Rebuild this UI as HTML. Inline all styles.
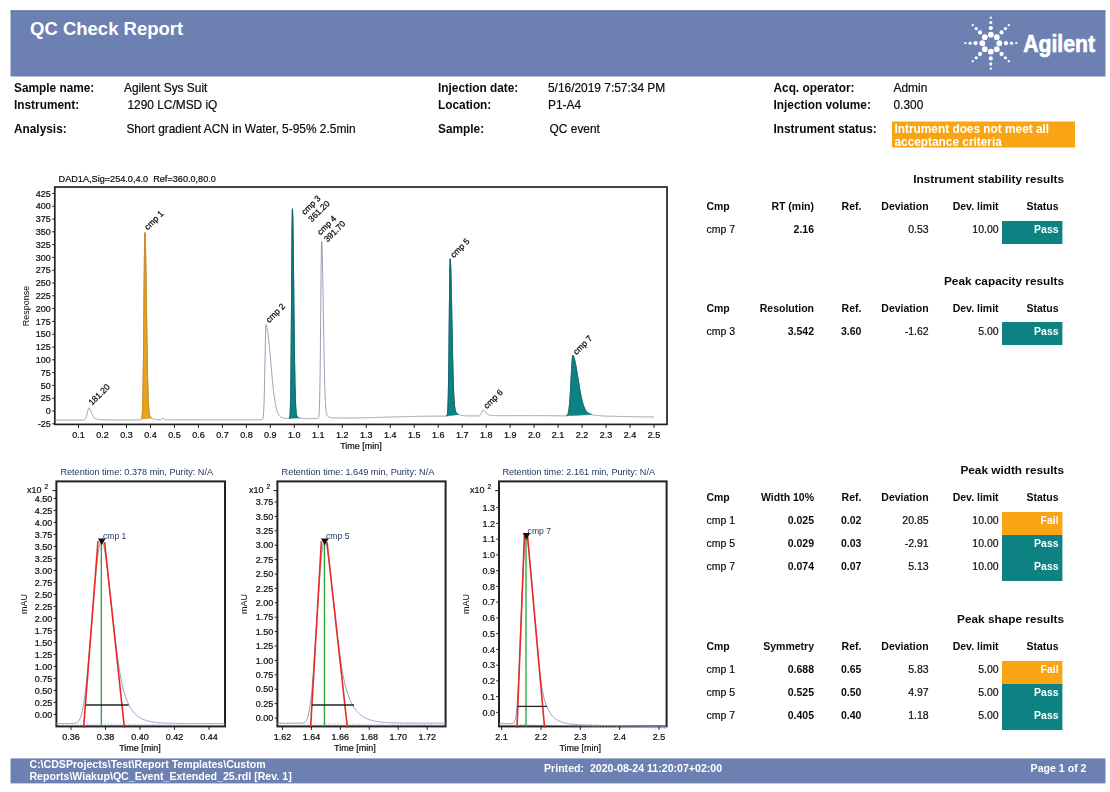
<!DOCTYPE html>
<html><head><meta charset="utf-8"><title>QC Check Report</title>
<style>
html,body{margin:0;padding:0;background:#fff;}
body{width:1110px;height:792px;overflow:hidden;font-family:"Liberation Sans",sans-serif;}
svg{display:block;font-family:"Liberation Sans",sans-serif;filter:blur(0.45px);}
</style></head><body>
<svg width="1110" height="792" viewBox="0 0 1110 792">
<rect x="10.5" y="10.5" width="1095" height="66" fill="#6c80b2"/>
<rect x="10.5" y="10.5" width="1095" height="1" fill="#55688f"/>
<text x="30.00" y="35.40" font-size="18.5" font-weight="bold" text-anchor="start" fill="#fff">QC Check Report</text>
<circle cx="999.30" cy="43.20" r="2.85" fill="#fff"/>
<circle cx="1006.00" cy="43.20" r="2.1" fill="#fff"/>
<circle cx="1011.50" cy="43.20" r="1.6" fill="#fff"/>
<circle cx="1016.30" cy="43.20" r="1.15" fill="#fff"/>
<circle cx="996.81" cy="49.21" r="2.85" fill="#fff"/>
<circle cx="1001.55" cy="53.95" r="2.1" fill="#fff"/>
<circle cx="1005.44" cy="57.84" r="1.6" fill="#fff"/>
<circle cx="1008.83" cy="61.23" r="1.15" fill="#fff"/>
<circle cx="990.80" cy="51.70" r="2.85" fill="#fff"/>
<circle cx="990.80" cy="58.40" r="2.1" fill="#fff"/>
<circle cx="990.80" cy="63.90" r="1.6" fill="#fff"/>
<circle cx="990.80" cy="68.70" r="1.15" fill="#fff"/>
<circle cx="984.79" cy="49.21" r="2.85" fill="#fff"/>
<circle cx="980.05" cy="53.95" r="2.1" fill="#fff"/>
<circle cx="976.16" cy="57.84" r="1.6" fill="#fff"/>
<circle cx="972.77" cy="61.23" r="1.15" fill="#fff"/>
<circle cx="982.30" cy="43.20" r="2.85" fill="#fff"/>
<circle cx="975.60" cy="43.20" r="2.1" fill="#fff"/>
<circle cx="970.10" cy="43.20" r="1.6" fill="#fff"/>
<circle cx="965.30" cy="43.20" r="1.15" fill="#fff"/>
<circle cx="984.79" cy="37.19" r="2.85" fill="#fff"/>
<circle cx="980.05" cy="32.45" r="2.1" fill="#fff"/>
<circle cx="976.16" cy="28.56" r="1.6" fill="#fff"/>
<circle cx="972.77" cy="25.17" r="1.15" fill="#fff"/>
<circle cx="990.80" cy="34.70" r="2.85" fill="#fff"/>
<circle cx="990.80" cy="28.00" r="2.1" fill="#fff"/>
<circle cx="990.80" cy="22.50" r="1.6" fill="#fff"/>
<circle cx="990.80" cy="17.70" r="1.15" fill="#fff"/>
<circle cx="996.81" cy="37.19" r="2.85" fill="#fff"/>
<circle cx="1001.55" cy="32.45" r="2.1" fill="#fff"/>
<circle cx="1005.44" cy="28.56" r="1.6" fill="#fff"/>
<circle cx="1008.83" cy="25.17" r="1.15" fill="#fff"/>
<text transform="translate(1023.2,51.6) scale(0.866,1)" font-size="24.5" font-weight="bold" fill="#fff" stroke="#fff" stroke-width="0.7">Agilent</text>
<text x="14.00" y="91.80" font-size="11.85" font-weight="bold" text-anchor="start" fill="#0a0a0a">Sample name:</text>
<text x="124.00" y="91.80" font-size="11.92" text-anchor="start" fill="#0a0a0a" stroke="#111" stroke-width="0.2">Agilent Sys Suit</text>
<text x="438.00" y="92.40" font-size="11.85" font-weight="bold" text-anchor="start" fill="#0a0a0a">Injection date:</text>
<text x="548.00" y="92.40" font-size="11.92" text-anchor="start" fill="#0a0a0a" stroke="#111" stroke-width="0.2">5/16/2019 7:57:34 PM</text>
<text x="773.50" y="91.80" font-size="11.85" font-weight="bold" text-anchor="start" fill="#0a0a0a">Acq. operator:</text>
<text x="893.50" y="91.80" font-size="11.92" text-anchor="start" fill="#0a0a0a" stroke="#111" stroke-width="0.2">Admin</text>
<text x="14.00" y="109.00" font-size="11.85" font-weight="bold" text-anchor="start" fill="#0a0a0a">Instrument:</text>
<text x="127.40" y="109.00" font-size="11.92" text-anchor="start" fill="#0a0a0a" stroke="#111" stroke-width="0.2">1290 LC/MSD iQ</text>
<text x="438.00" y="109.00" font-size="11.85" font-weight="bold" text-anchor="start" fill="#0a0a0a">Location:</text>
<text x="548.00" y="109.00" font-size="11.92" text-anchor="start" fill="#0a0a0a" stroke="#111" stroke-width="0.2">P1-A4</text>
<text x="773.50" y="109.00" font-size="11.85" font-weight="bold" text-anchor="start" fill="#0a0a0a">Injection volume:</text>
<text x="893.50" y="109.00" font-size="11.92" text-anchor="start" fill="#0a0a0a" stroke="#111" stroke-width="0.2">0.300</text>
<text x="14.00" y="132.80" font-size="11.85" font-weight="bold" text-anchor="start" fill="#0a0a0a">Analysis:</text>
<text x="126.40" y="132.80" font-size="11.92" text-anchor="start" fill="#0a0a0a" stroke="#111" stroke-width="0.2">Short gradient ACN in Water, 5-95% 2.5min</text>
<text x="438.00" y="133.00" font-size="11.85" font-weight="bold" text-anchor="start" fill="#0a0a0a">Sample:</text>
<text x="549.60" y="133.00" font-size="11.92" text-anchor="start" fill="#0a0a0a" stroke="#111" stroke-width="0.2">QC event</text>
<text x="773.50" y="132.80" font-size="11.85" font-weight="bold" text-anchor="start" fill="#0a0a0a">Instrument status:</text>
<rect x="892" y="121.5" width="183" height="26" fill="#f9a513"/>
<text x="894.50" y="132.80" font-size="11.85" font-weight="bold" text-anchor="start" fill="#fff">Intrument does not meet all</text>
<text x="894.50" y="145.60" font-size="11.85" font-weight="bold" text-anchor="start" fill="#fff">acceptance criteria</text>
<text x="1064.00" y="183.00" font-size="11.8" font-weight="bold" text-anchor="end" fill="#0a0a0a">Instrument stability results</text>
<text x="706.40" y="210.00" font-size="10.5" font-weight="bold" text-anchor="start" fill="#0a0a0a">Cmp</text>
<text x="814.00" y="210.00" font-size="10.5" font-weight="bold" text-anchor="end" fill="#0a0a0a">RT (min)</text>
<text x="861.40" y="210.00" font-size="10.5" font-weight="bold" text-anchor="end" fill="#0a0a0a">Ref.</text>
<text x="928.60" y="210.00" font-size="10.5" font-weight="bold" text-anchor="end" fill="#0a0a0a">Deviation</text>
<text x="998.60" y="210.00" font-size="10.5" font-weight="bold" text-anchor="end" fill="#0a0a0a">Dev. limit</text>
<text x="1058.60" y="210.00" font-size="10.5" font-weight="bold" text-anchor="end" fill="#0a0a0a">Status</text>
<rect x="1002" y="221" width="60.4" height="23" fill="#0e8282"/>
<text x="706.40" y="233.00" font-size="10.5" text-anchor="start" fill="#0a0a0a" stroke="#111" stroke-width="0.2">cmp 7</text>
<text x="814.00" y="233.00" font-size="10.5" font-weight="bold" text-anchor="end" fill="#0a0a0a">2.16</text>
<text x="928.60" y="233.00" font-size="10.5" text-anchor="end" fill="#0a0a0a" stroke="#111" stroke-width="0.2">0.53</text>
<text x="998.60" y="233.00" font-size="10.5" text-anchor="end" fill="#0a0a0a" stroke="#111" stroke-width="0.2">10.00</text>
<text x="1058.60" y="233.00" font-size="10.5" font-weight="bold" text-anchor="end" fill="#fff">Pass</text>
<text x="1064.00" y="284.60" font-size="11.8" font-weight="bold" text-anchor="end" fill="#0a0a0a">Peak capacity results</text>
<text x="706.40" y="311.60" font-size="10.5" font-weight="bold" text-anchor="start" fill="#0a0a0a">Cmp</text>
<text x="814.00" y="311.60" font-size="10.5" font-weight="bold" text-anchor="end" fill="#0a0a0a">Resolution</text>
<text x="861.40" y="311.60" font-size="10.5" font-weight="bold" text-anchor="end" fill="#0a0a0a">Ref.</text>
<text x="928.60" y="311.60" font-size="10.5" font-weight="bold" text-anchor="end" fill="#0a0a0a">Deviation</text>
<text x="998.60" y="311.60" font-size="10.5" font-weight="bold" text-anchor="end" fill="#0a0a0a">Dev. limit</text>
<text x="1058.60" y="311.60" font-size="10.5" font-weight="bold" text-anchor="end" fill="#0a0a0a">Status</text>
<rect x="1002" y="322" width="60.4" height="23" fill="#0e8282"/>
<text x="706.40" y="334.60" font-size="10.5" text-anchor="start" fill="#0a0a0a" stroke="#111" stroke-width="0.2">cmp 3</text>
<text x="814.00" y="334.60" font-size="10.5" font-weight="bold" text-anchor="end" fill="#0a0a0a">3.542</text>
<text x="861.40" y="334.60" font-size="10.5" font-weight="bold" text-anchor="end" fill="#0a0a0a">3.60</text>
<text x="928.60" y="334.60" font-size="10.5" text-anchor="end" fill="#0a0a0a" stroke="#111" stroke-width="0.2">-1.62</text>
<text x="998.60" y="334.60" font-size="10.5" text-anchor="end" fill="#0a0a0a" stroke="#111" stroke-width="0.2">5.00</text>
<text x="1058.60" y="334.60" font-size="10.5" font-weight="bold" text-anchor="end" fill="#fff">Pass</text>
<text x="1064.00" y="474.40" font-size="11.8" font-weight="bold" text-anchor="end" fill="#0a0a0a">Peak width results</text>
<text x="706.40" y="501.40" font-size="10.5" font-weight="bold" text-anchor="start" fill="#0a0a0a">Cmp</text>
<text x="814.00" y="501.40" font-size="10.5" font-weight="bold" text-anchor="end" fill="#0a0a0a">Width 10%</text>
<text x="861.40" y="501.40" font-size="10.5" font-weight="bold" text-anchor="end" fill="#0a0a0a">Ref.</text>
<text x="928.60" y="501.40" font-size="10.5" font-weight="bold" text-anchor="end" fill="#0a0a0a">Deviation</text>
<text x="998.60" y="501.40" font-size="10.5" font-weight="bold" text-anchor="end" fill="#0a0a0a">Dev. limit</text>
<text x="1058.60" y="501.40" font-size="10.5" font-weight="bold" text-anchor="end" fill="#0a0a0a">Status</text>
<rect x="1002" y="512" width="60.4" height="23" fill="#f9a513"/>
<text x="706.40" y="524.40" font-size="10.5" text-anchor="start" fill="#0a0a0a" stroke="#111" stroke-width="0.2">cmp 1</text>
<text x="814.00" y="524.40" font-size="10.5" font-weight="bold" text-anchor="end" fill="#0a0a0a">0.025</text>
<text x="861.40" y="524.40" font-size="10.5" font-weight="bold" text-anchor="end" fill="#0a0a0a">0.02</text>
<text x="928.60" y="524.40" font-size="10.5" text-anchor="end" fill="#0a0a0a" stroke="#111" stroke-width="0.2">20.85</text>
<text x="998.60" y="524.40" font-size="10.5" text-anchor="end" fill="#0a0a0a" stroke="#111" stroke-width="0.2">10.00</text>
<text x="1058.60" y="524.40" font-size="10.5" font-weight="bold" text-anchor="end" fill="#fff">Fail</text>
<rect x="1002" y="535" width="60.4" height="23" fill="#0e8282"/>
<text x="706.40" y="547.40" font-size="10.5" text-anchor="start" fill="#0a0a0a" stroke="#111" stroke-width="0.2">cmp 5</text>
<text x="814.00" y="547.40" font-size="10.5" font-weight="bold" text-anchor="end" fill="#0a0a0a">0.029</text>
<text x="861.40" y="547.40" font-size="10.5" font-weight="bold" text-anchor="end" fill="#0a0a0a">0.03</text>
<text x="928.60" y="547.40" font-size="10.5" text-anchor="end" fill="#0a0a0a" stroke="#111" stroke-width="0.2">-2.91</text>
<text x="998.60" y="547.40" font-size="10.5" text-anchor="end" fill="#0a0a0a" stroke="#111" stroke-width="0.2">10.00</text>
<text x="1058.60" y="547.40" font-size="10.5" font-weight="bold" text-anchor="end" fill="#fff">Pass</text>
<rect x="1002" y="558" width="60.4" height="23" fill="#0e8282"/>
<text x="706.40" y="570.40" font-size="10.5" text-anchor="start" fill="#0a0a0a" stroke="#111" stroke-width="0.2">cmp 7</text>
<text x="814.00" y="570.40" font-size="10.5" font-weight="bold" text-anchor="end" fill="#0a0a0a">0.074</text>
<text x="861.40" y="570.40" font-size="10.5" font-weight="bold" text-anchor="end" fill="#0a0a0a">0.07</text>
<text x="928.60" y="570.40" font-size="10.5" text-anchor="end" fill="#0a0a0a" stroke="#111" stroke-width="0.2">5.13</text>
<text x="998.60" y="570.40" font-size="10.5" text-anchor="end" fill="#0a0a0a" stroke="#111" stroke-width="0.2">10.00</text>
<text x="1058.60" y="570.40" font-size="10.5" font-weight="bold" text-anchor="end" fill="#fff">Pass</text>
<text x="1064.00" y="623.20" font-size="11.8" font-weight="bold" text-anchor="end" fill="#0a0a0a">Peak shape results</text>
<text x="706.40" y="650.20" font-size="10.5" font-weight="bold" text-anchor="start" fill="#0a0a0a">Cmp</text>
<text x="814.00" y="650.20" font-size="10.5" font-weight="bold" text-anchor="end" fill="#0a0a0a">Symmetry</text>
<text x="861.40" y="650.20" font-size="10.5" font-weight="bold" text-anchor="end" fill="#0a0a0a">Ref.</text>
<text x="928.60" y="650.20" font-size="10.5" font-weight="bold" text-anchor="end" fill="#0a0a0a">Deviation</text>
<text x="998.60" y="650.20" font-size="10.5" font-weight="bold" text-anchor="end" fill="#0a0a0a">Dev. limit</text>
<text x="1058.60" y="650.20" font-size="10.5" font-weight="bold" text-anchor="end" fill="#0a0a0a">Status</text>
<rect x="1002" y="661" width="60.4" height="23" fill="#f9a513"/>
<text x="706.40" y="673.20" font-size="10.5" text-anchor="start" fill="#0a0a0a" stroke="#111" stroke-width="0.2">cmp 1</text>
<text x="814.00" y="673.20" font-size="10.5" font-weight="bold" text-anchor="end" fill="#0a0a0a">0.688</text>
<text x="861.40" y="673.20" font-size="10.5" font-weight="bold" text-anchor="end" fill="#0a0a0a">0.65</text>
<text x="928.60" y="673.20" font-size="10.5" text-anchor="end" fill="#0a0a0a" stroke="#111" stroke-width="0.2">5.83</text>
<text x="998.60" y="673.20" font-size="10.5" text-anchor="end" fill="#0a0a0a" stroke="#111" stroke-width="0.2">5.00</text>
<text x="1058.60" y="673.20" font-size="10.5" font-weight="bold" text-anchor="end" fill="#fff">Fail</text>
<rect x="1002" y="684" width="60.4" height="23" fill="#0e8282"/>
<text x="706.40" y="696.20" font-size="10.5" text-anchor="start" fill="#0a0a0a" stroke="#111" stroke-width="0.2">cmp 5</text>
<text x="814.00" y="696.20" font-size="10.5" font-weight="bold" text-anchor="end" fill="#0a0a0a">0.525</text>
<text x="861.40" y="696.20" font-size="10.5" font-weight="bold" text-anchor="end" fill="#0a0a0a">0.50</text>
<text x="928.60" y="696.20" font-size="10.5" text-anchor="end" fill="#0a0a0a" stroke="#111" stroke-width="0.2">4.97</text>
<text x="998.60" y="696.20" font-size="10.5" text-anchor="end" fill="#0a0a0a" stroke="#111" stroke-width="0.2">5.00</text>
<text x="1058.60" y="696.20" font-size="10.5" font-weight="bold" text-anchor="end" fill="#fff">Pass</text>
<rect x="1002" y="707" width="60.4" height="23" fill="#0e8282"/>
<text x="706.40" y="719.20" font-size="10.5" text-anchor="start" fill="#0a0a0a" stroke="#111" stroke-width="0.2">cmp 7</text>
<text x="814.00" y="719.20" font-size="10.5" font-weight="bold" text-anchor="end" fill="#0a0a0a">0.405</text>
<text x="861.40" y="719.20" font-size="10.5" font-weight="bold" text-anchor="end" fill="#0a0a0a">0.40</text>
<text x="928.60" y="719.20" font-size="10.5" text-anchor="end" fill="#0a0a0a" stroke="#111" stroke-width="0.2">1.18</text>
<text x="998.60" y="719.20" font-size="10.5" text-anchor="end" fill="#0a0a0a" stroke="#111" stroke-width="0.2">5.00</text>
<text x="1058.60" y="719.20" font-size="10.5" font-weight="bold" text-anchor="end" fill="#fff">Pass</text>
<rect x="10.5" y="758.4" width="1095" height="25" fill="#6c80b2"/>
<text x="29.40" y="768.40" font-size="10.6" font-weight="bold" text-anchor="start" fill="#fff">C:\CDSProjects\Test\Report Templates\Custom</text>
<text x="29.40" y="780.00" font-size="10.6" font-weight="bold" text-anchor="start" fill="#fff">Reports\Wiakup\QC_Event_Extended_25.rdl [Rev. 1]</text>
<text x="544.00" y="771.50" font-size="10.6" font-weight="bold" text-anchor="start" fill="#fff">Printed:&#160;&#160;2020-08-24 11:20:07+02:00</text>
<text x="1086.50" y="771.50" font-size="10.6" font-weight="bold" text-anchor="end" fill="#fff">Page 1 of 2</text>
<rect x="54.8" y="187" width="612.2" height="237.39999999999998" fill="#fff" stroke="#222" stroke-width="1.7"/>
<path d="M54.55,420.01 L54.70,420.01 L54.85,420.01 L55.00,420.01 L55.15,420.01 L55.30,420.01 L55.45,420.01 L55.60,420.01 L55.75,420.01 L55.90,420.01 L56.05,420.01 L56.20,420.01 L56.35,420.01 L56.50,420.01 L56.65,420.01 L56.80,420.01 L56.95,420.01 L57.10,420.01 L57.25,420.01 L57.40,420.01 L57.55,420.01 L57.70,420.01 L57.85,420.01 L58.00,420.01 L58.15,420.01 L58.30,420.01 L58.45,420.01 L58.60,420.01 L58.75,420.01 L58.90,420.01 L59.05,420.01 L59.20,420.01 L59.35,420.01 L59.50,420.01 L59.65,420.01 L59.80,420.01 L59.95,420.01 L60.10,420.01 L60.25,420.01 L60.40,420.01 L60.55,420.01 L60.69,420.01 L60.84,420.01 L60.99,420.01 L61.14,420.01 L61.29,420.01 L61.44,420.01 L61.59,420.01 L61.74,420.01 L61.89,420.01 L62.04,420.01 L62.19,420.01 L62.34,420.01 L62.49,420.01 L62.64,420.01 L62.79,420.01 L62.94,420.01 L63.09,420.01 L63.24,420.01 L63.39,420.01 L63.54,420.01 L63.69,420.01 L63.84,420.01 L63.99,420.01 L64.14,420.01 L64.29,420.01 L64.44,420.01 L64.59,420.01 L64.74,420.01 L64.89,420.01 L65.04,420.01 L65.19,420.01 L65.34,420.01 L65.49,420.01 L65.64,420.01 L65.79,420.01 L65.94,420.01 L66.09,420.01 L66.24,420.01 L66.39,420.01 L66.54,420.01 L66.69,420.01 L66.84,420.01 L66.99,420.01 L67.14,420.01 L67.29,420.01 L67.44,420.01 L67.59,420.01 L67.74,420.01 L67.89,420.01 L68.04,420.01 L68.19,420.01 L68.34,420.01 L68.49,420.01 L68.64,420.01 L68.79,420.01 L68.94,420.01 L69.09,420.01 L69.24,420.01 L69.39,420.01 L69.54,420.01 L69.69,420.01 L69.84,420.01 L69.99,420.01 L70.14,420.01 L70.29,420.01 L70.44,420.01 L70.59,420.01 L70.74,420.01 L70.89,420.01 L71.04,420.01 L71.19,420.01 L71.34,420.01 L71.49,420.01 L71.64,420.01 L71.79,420.01 L71.94,420.01 L72.09,420.01 L72.24,420.01 L72.39,420.01 L72.53,420.01 L72.68,420.01 L72.83,420.01 L72.98,420.01 L73.13,420.01 L73.28,420.01 L73.43,420.01 L73.58,420.01 L73.73,420.01 L73.88,420.01 L74.03,420.01 L74.18,420.01 L74.33,420.01 L74.48,420.01 L74.63,420.01 L74.78,420.01 L74.93,420.01 L75.08,420.01 L75.23,420.01 L75.38,420.01 L75.53,420.01 L75.68,420.01 L75.83,420.00 L75.98,420.00 L76.13,420.00 L76.28,420.00 L76.43,420.00 L76.58,420.00 L76.73,420.00 L76.88,420.00 L77.03,420.00 L77.18,420.00 L77.33,420.00 L77.48,420.00 L77.63,420.00 L77.78,420.00 L77.93,420.00 L78.08,420.00 L78.23,420.00 L78.38,420.00 L78.53,420.00 L78.68,420.00 L78.83,420.00 L78.98,420.00 L79.13,420.00 L79.28,420.00 L79.43,420.00 L79.58,420.00 L79.73,420.00 L79.88,420.00 L80.03,420.00 L80.18,420.00 L80.33,420.00 L80.48,420.00 L80.63,420.00 L80.78,420.00 L80.93,420.00 L81.08,420.00 L81.23,420.00 L81.38,420.00 L81.53,420.00 L81.68,420.00 L81.83,420.00 L81.98,420.00 L82.13,420.00 L82.28,420.00 L82.43,420.00 L82.58,419.99 L82.73,419.99 L82.88,419.99 L83.03,419.98 L83.18,419.97 L83.33,419.97 L83.48,419.95 L83.63,419.94 L83.78,419.92 L83.93,419.89 L84.08,419.86 L84.23,419.81 L84.38,419.76 L84.53,419.69 L84.67,419.61 L84.82,419.51 L84.97,419.38 L85.12,419.23 L85.27,419.06 L85.42,418.85 L85.57,418.61 L85.72,418.34 L85.87,418.02 L86.02,417.66 L86.17,417.26 L86.32,416.81 L86.47,416.32 L86.62,415.79 L86.77,415.22 L86.92,414.62 L87.07,413.99 L87.22,413.34 L87.37,412.68 L87.52,412.01 L87.67,411.36 L87.82,410.72 L87.97,410.12 L88.12,409.56 L88.27,409.06 L88.42,408.62 L88.57,408.26 L88.72,407.99 L88.87,407.80 L89.02,407.72 L89.17,407.80 L89.32,407.98 L89.47,408.18 L89.62,408.41 L89.77,408.67 L89.92,408.94 L90.07,409.24 L90.22,409.56 L90.37,409.89 L90.52,410.24 L90.67,410.60 L90.82,410.98 L90.97,411.36 L91.12,411.75 L91.27,412.14 L91.42,412.53 L91.57,412.91 L91.72,413.30 L91.87,413.67 L92.02,414.04 L92.17,414.40 L92.32,414.75 L92.47,415.08 L92.62,415.41 L92.77,415.71 L92.92,416.00 L93.07,416.28 L93.22,416.54 L93.37,416.78 L93.52,417.01 L93.67,417.22 L93.82,417.42 L93.97,417.60 L94.12,417.77 L94.27,417.93 L94.42,418.07 L94.57,418.20 L94.72,418.32 L94.87,418.43 L95.02,418.53 L95.17,418.62 L95.32,418.70 L95.47,418.78 L95.62,418.85 L95.77,418.91 L95.92,418.97 L96.07,419.02 L96.22,419.07 L96.37,419.11 L96.51,419.15 L96.66,419.19 L96.81,419.23 L96.96,419.26 L97.11,419.29 L97.26,419.32 L97.41,419.34 L97.56,419.37 L97.71,419.39 L97.86,419.42 L98.01,419.44 L98.16,419.46 L98.31,419.48 L98.46,419.49 L98.61,419.51 L98.76,419.53 L98.91,419.54 L99.06,419.56 L99.21,419.57 L99.36,419.59 L99.51,419.60 L99.66,419.61 L99.81,419.63 L99.96,419.64 L100.11,419.65 L100.26,419.66 L100.41,419.67 L100.56,419.68 L100.71,419.69 L100.86,419.70 L101.01,419.71 L101.16,419.72 L101.31,419.73 L101.46,419.74 L101.61,419.75 L101.76,419.76 L101.91,419.76 L102.06,419.77 L102.21,419.78 L102.36,419.78 L102.51,419.79 L102.66,419.80 L102.81,419.80 L102.96,419.81 L103.11,419.82 L103.26,419.82 L103.41,419.83 L103.56,419.83 L103.71,419.84 L103.86,419.84 L104.01,419.85 L104.16,419.85 L104.31,419.85 L104.46,419.86 L104.61,419.86 L104.76,419.87 L104.91,419.87 L105.06,419.87 L105.21,419.88 L105.36,419.88 L105.51,419.88 L105.66,419.89 L105.81,419.89 L105.96,419.89 L106.11,419.90 L106.26,419.90 L106.41,419.90 L106.56,419.90 L106.71,419.91 L106.86,419.91 L107.01,419.91 L107.16,419.91 L107.31,419.91 L107.46,419.92 L107.61,419.92 L107.76,419.92 L107.91,419.92 L108.06,419.92 L108.21,419.92 L108.36,419.93 L108.50,419.93 L108.65,419.93 L108.80,419.93 L108.95,419.93 L109.10,419.93 L109.25,419.93 L109.40,419.94 L109.55,419.94 L109.70,419.94 L109.85,419.94 L110.00,419.94 L110.15,419.94 L110.30,419.94 L110.45,419.94 L110.60,419.94 L110.75,419.94 L110.90,419.95 L111.05,419.95 L111.20,419.95 L111.35,419.95 L111.50,419.95 L111.65,419.95 L111.80,419.95 L111.95,419.95 L112.10,419.95 L112.25,419.95 L112.40,419.95 L112.55,419.95 L112.70,419.95 L112.85,419.95 L113.00,419.95 L113.15,419.95 L113.30,419.95 L113.45,419.95 L113.60,419.95 L113.75,419.96 L113.90,419.96 L114.05,419.96 L114.20,419.96 L114.35,419.96 L114.50,419.96 L114.65,419.96 L114.80,419.96 L114.95,419.96 L115.10,419.96 L115.25,419.96 L115.40,419.96 L115.55,419.96 L115.70,419.96 L115.85,419.96 L116.00,419.96 L116.15,419.96 L116.30,419.96 L116.45,419.96 L116.60,419.96 L116.75,419.96 L116.90,419.96 L117.05,419.96 L117.20,419.96 L117.35,419.96 L117.50,419.96 L117.65,419.96 L117.80,419.96 L117.95,419.96 L118.10,419.96 L118.25,419.96 L118.40,419.96 L118.55,419.96 L118.70,419.96 L118.85,419.96 L119.00,419.96 L119.15,419.96 L119.30,419.96 L119.45,419.96 L119.60,419.96 L119.75,419.96 L119.90,419.96 L120.05,419.96 L120.20,419.96 L120.35,419.96 L120.50,419.96 L120.64,419.96 L120.79,419.96 L120.94,419.96 L121.09,419.96 L121.24,419.96 L121.39,419.96 L121.54,419.96 L121.69,419.96 L121.84,419.96 L121.99,419.96 L122.14,419.96 L122.29,419.96 L122.44,419.96 L122.59,419.96 L122.74,419.96 L122.89,419.96 L123.04,419.96 L123.19,419.96 L123.34,419.96 L123.49,419.96 L123.64,419.96 L123.79,419.95 L123.94,419.95 L124.09,419.95 L124.24,419.95 L124.39,419.95 L124.54,419.95 L124.69,419.95 L124.84,419.95 L124.99,419.95 L125.14,419.95 L125.29,419.95 L125.44,419.95 L125.59,419.95 L125.74,419.95 L125.89,419.95 L126.04,419.95 L126.19,419.95 L126.34,419.95 L126.49,419.95 L126.64,419.95 L126.79,419.95 L126.94,419.95 L127.09,419.95 L127.24,419.95 L127.39,419.95 L127.54,419.95 L127.69,419.95 L127.84,419.95 L127.99,419.95 L128.14,419.95 L128.29,419.95 L128.44,419.95 L128.59,419.95 L128.74,419.95 L128.89,419.95 L129.04,419.95 L129.19,419.95 L129.34,419.95 L129.49,419.95 L129.64,419.95 L129.79,419.95 L129.94,419.95 L130.09,419.95 L130.24,419.95 L130.39,419.95 L130.54,419.95 L130.69,419.95 L130.84,419.95 L130.99,419.95 L131.14,419.95 L131.29,419.95 L131.44,419.95 L131.59,419.95 L131.74,419.95 L131.89,419.94 L132.04,419.94 L132.19,419.94 L132.34,419.94 L132.49,419.94 L132.63,419.94 L132.78,419.94 L132.93,419.94 L133.08,419.94 L133.23,419.94 L133.38,419.94 L133.53,419.94 L133.68,419.94 L133.83,419.94 L133.98,419.94 L134.13,419.94 L134.28,419.94 L134.43,419.94 L134.58,419.94 L134.73,419.94 L134.88,419.94 L135.03,419.94 L135.18,419.94 L135.33,419.94 L135.48,419.94 L135.63,419.94 L135.78,419.94 L135.93,419.94 L136.08,419.94 L136.23,419.94 L136.38,419.94 L136.53,419.94 L136.68,419.94 L136.83,419.94 L136.98,419.94 L137.13,419.94 L137.28,419.94 L137.43,419.94 L137.58,419.94 L137.73,419.94 L137.88,419.94 L138.03,419.94 L138.18,419.94 L138.33,419.94 L138.48,419.94 L138.63,419.94 L138.78,419.94 L138.93,419.93 L139.08,419.93 L139.23,419.93 L139.38,419.93 L139.53,419.93 L139.68,419.93 L139.83,419.93 L139.98,419.93 L140.13,419.93 L140.28,419.93 L140.43,419.93 L140.58,419.92 L140.73,419.90 L140.88,419.88 L141.03,419.84 L141.18,419.77 L141.33,419.65 L141.48,419.45 L141.63,419.13 L141.78,418.64 L141.93,417.89 L142.08,416.77 L142.23,415.14 L142.38,412.85 L142.53,409.68 L142.68,405.42 L142.83,399.83 L142.98,392.71 L143.13,383.87 L143.28,373.20 L143.43,360.71 L143.58,346.52 L143.73,330.92 L143.88,314.37 L144.03,297.49 L144.18,281.02 L144.33,265.78 L144.48,252.62 L144.62,242.31 L144.77,235.50 L144.92,232.62 L145.07,233.85 L145.22,236.96 L145.37,241.66 L145.52,247.83 L145.67,255.31 L145.82,263.92 L145.97,273.43 L146.12,283.64 L146.27,294.28 L146.42,305.15 L146.57,316.00 L146.72,326.66 L146.87,336.94 L147.02,346.70 L147.17,355.84 L147.32,364.25 L147.47,371.91 L147.62,378.79 L147.77,384.89 L147.92,390.23 L148.07,394.86 L148.22,398.82 L148.37,402.19 L148.52,405.01 L148.67,407.36 L148.82,409.30 L148.97,410.89 L149.12,412.19 L149.27,413.25 L149.42,414.10 L149.57,414.79 L149.72,415.35 L149.87,415.81 L150.02,416.19 L150.17,416.50 L150.32,416.76 L150.47,416.99 L150.62,417.18 L150.77,417.35 L150.92,417.51 L151.07,417.64 L151.22,417.77 L151.37,417.88 L151.52,417.99 L151.67,418.09 L151.82,418.19 L151.97,418.28 L152.12,418.36 L152.27,418.44 L152.42,418.51 L152.57,418.58 L152.72,418.65 L152.87,418.72 L153.02,418.78 L153.17,418.83 L153.32,418.89 L153.47,418.94 L153.62,418.99 L153.77,419.04 L153.92,419.08 L154.07,419.12 L154.22,419.16 L154.37,419.20 L154.52,419.24 L154.67,419.27 L154.82,419.30 L154.97,419.33 L155.12,419.36 L155.27,419.39 L155.42,419.42 L155.57,419.44 L155.72,419.46 L155.87,419.49 L156.02,419.51 L156.17,419.53 L156.32,419.55 L156.47,419.57 L156.61,419.58 L156.76,419.60 L156.91,419.61 L157.06,419.63 L157.21,419.64 L157.36,419.66 L157.51,419.67 L157.66,419.68 L157.81,419.69 L157.96,419.70 L158.11,419.71 L158.26,419.72 L158.41,419.73 L158.56,419.74 L158.71,419.75 L158.86,419.76 L159.01,419.76 L159.16,419.77 L159.31,419.78 L159.46,419.78 L159.61,419.79 L159.76,419.79 L159.91,419.79 L160.06,419.79 L160.21,419.78 L160.36,419.77 L160.51,419.76 L160.66,419.73 L160.81,419.70 L160.96,419.65 L161.11,419.58 L161.26,419.50 L161.41,419.41 L161.56,419.30 L161.71,419.17 L161.86,419.03 L162.01,418.89 L162.16,418.75 L162.31,418.62 L162.46,418.50 L162.61,418.41 L162.76,418.35 L162.91,418.33 L163.06,418.34 L163.21,418.39 L163.36,418.47 L163.51,418.58 L163.66,418.71 L163.81,418.85 L163.96,419.00 L164.11,419.14 L164.26,419.28 L164.41,419.40 L164.56,419.51 L164.71,419.60 L164.86,419.67 L165.01,419.73 L165.16,419.77 L165.31,419.81 L165.46,419.83 L165.61,419.85 L165.76,419.86 L165.91,419.87 L166.06,419.87 L166.21,419.88 L166.36,419.88 L166.51,419.88 L166.66,419.88 L166.81,419.88 L166.96,419.88 L167.11,419.88 L167.26,419.88 L167.41,419.88 L167.56,419.88 L167.71,419.89 L167.86,419.89 L168.01,419.89 L168.16,419.89 L168.31,419.89 L168.45,419.89 L168.60,419.89 L168.75,419.89 L168.90,419.89 L169.05,419.89 L169.20,419.89 L169.35,419.89 L169.50,419.89 L169.65,419.89 L169.80,419.89 L169.95,419.89 L170.10,419.89 L170.25,419.89 L170.40,419.89 L170.55,419.89 L170.70,419.89 L170.85,419.88 L171.00,419.88 L171.15,419.88 L171.30,419.88 L171.45,419.88 L171.60,419.88 L171.75,419.88 L171.90,419.88 L172.05,419.88 L172.20,419.88 L172.35,419.88 L172.50,419.88 L172.65,419.88 L172.80,419.88 L172.95,419.88 L173.10,419.88 L173.25,419.88 L173.40,419.88 L173.55,419.88 L173.70,419.88 L173.85,419.88 L174.00,419.88 L174.15,419.88 L174.30,419.88 L174.45,419.88 L174.60,419.88 L174.75,419.88 L174.90,419.88 L175.05,419.88 L175.20,419.88 L175.35,419.88 L175.50,419.88 L175.65,419.88 L175.80,419.88 L175.95,419.88 L176.10,419.88 L176.25,419.88 L176.40,419.88 L176.55,419.88 L176.70,419.88 L176.85,419.88 L177.00,419.88 L177.15,419.88 L177.30,419.88 L177.45,419.88 L177.60,419.88 L177.75,419.88 L177.90,419.88 L178.05,419.88 L178.20,419.88 L178.35,419.88 L178.50,419.88 L178.65,419.88 L178.80,419.88 L178.95,419.88 L179.10,419.88 L179.25,419.87 L179.40,419.87 L179.55,419.87 L179.70,419.87 L179.85,419.87 L180.00,419.87 L180.15,419.87 L180.30,419.87 L180.44,419.87 L180.59,419.87 L180.74,419.87 L180.89,419.87 L181.04,419.87 L181.19,419.87 L181.34,419.87 L181.49,419.87 L181.64,419.87 L181.79,419.87 L181.94,419.87 L182.09,419.87 L182.24,419.87 L182.39,419.87 L182.54,419.87 L182.69,419.87 L182.84,419.87 L182.99,419.87 L183.14,419.87 L183.29,419.87 L183.44,419.87 L183.59,419.87 L183.74,419.87 L183.89,419.87 L184.04,419.87 L184.19,419.87 L184.34,419.87 L184.49,419.87 L184.64,419.87 L184.79,419.87 L184.94,419.87 L185.09,419.87 L185.24,419.87 L185.39,419.87 L185.54,419.87 L185.69,419.87 L185.84,419.87 L185.99,419.87 L186.14,419.87 L186.29,419.87 L186.44,419.86 L186.59,419.86 L186.74,419.86 L186.89,419.86 L187.04,419.86 L187.19,419.86 L187.34,419.86 L187.49,419.86 L187.64,419.86 L187.79,419.86 L187.94,419.86 L188.09,419.86 L188.24,419.86 L188.39,419.86 L188.54,419.86 L188.69,419.86 L188.84,419.86 L188.99,419.86 L189.14,419.86 L189.29,419.86 L189.44,419.86 L189.59,419.86 L189.74,419.86 L189.89,419.86 L190.04,419.86 L190.19,419.86 L190.34,419.86 L190.49,419.86 L190.64,419.86 L190.79,419.86 L190.94,419.86 L191.09,419.86 L191.24,419.86 L191.39,419.86 L191.54,419.86 L191.69,419.86 L191.84,419.86 L191.99,419.86 L192.14,419.86 L192.29,419.86 L192.44,419.86 L192.58,419.86 L192.73,419.86 L192.88,419.86 L193.03,419.86 L193.18,419.86 L193.33,419.86 L193.48,419.86 L193.63,419.86 L193.78,419.86 L193.93,419.85 L194.08,419.85 L194.23,419.85 L194.38,419.85 L194.53,419.85 L194.68,419.85 L194.83,419.85 L194.98,419.85 L195.13,419.85 L195.28,419.85 L195.43,419.85 L195.58,419.85 L195.73,419.85 L195.88,419.85 L196.03,419.85 L196.18,419.85 L196.33,419.85 L196.48,419.85 L196.63,419.85 L196.78,419.85 L196.93,419.85 L197.08,419.85 L197.23,419.85 L197.38,419.85 L197.53,419.85 L197.68,419.85 L197.83,419.85 L197.98,419.85 L198.13,419.85 L198.28,419.85 L198.43,419.85 L198.58,419.85 L198.73,419.85 L198.88,419.85 L199.03,419.85 L199.18,419.85 L199.33,419.85 L199.48,419.85 L199.63,419.85 L199.78,419.85 L199.93,419.85 L200.08,419.85 L200.23,419.85 L200.38,419.85 L200.53,419.85 L200.68,419.85 L200.83,419.85 L200.98,419.85 L201.13,419.85 L201.28,419.85 L201.43,419.85 L201.58,419.85 L201.73,419.85 L201.88,419.84 L202.03,419.84 L202.18,419.84 L202.33,419.84 L202.48,419.84 L202.63,419.84 L202.78,419.84 L202.93,419.84 L203.08,419.84 L203.23,419.84 L203.38,419.84 L203.53,419.84 L203.68,419.84 L203.83,419.84 L203.98,419.84 L204.13,419.84 L204.28,419.84 L204.43,419.84 L204.57,419.84 L204.72,419.84 L204.87,419.84 L205.02,419.84 L205.17,419.84 L205.32,419.84 L205.47,419.84 L205.62,419.84 L205.77,419.84 L205.92,419.84 L206.07,419.84 L206.22,419.84 L206.37,419.84 L206.52,419.84 L206.67,419.84 L206.82,419.84 L206.97,419.84 L207.12,419.84 L207.27,419.84 L207.42,419.84 L207.57,419.84 L207.72,419.84 L207.87,419.84 L208.02,419.84 L208.17,419.84 L208.32,419.84 L208.47,419.84 L208.62,419.84 L208.77,419.84 L208.92,419.84 L209.07,419.84 L209.22,419.84 L209.37,419.84 L209.52,419.84 L209.67,419.84 L209.82,419.84 L209.97,419.84 L210.12,419.84 L210.27,419.84 L210.42,419.84 L210.57,419.83 L210.72,419.83 L210.87,419.83 L211.02,419.83 L211.17,419.83 L211.32,419.83 L211.47,419.83 L211.62,419.83 L211.77,419.83 L211.92,419.83 L212.07,419.83 L212.22,419.83 L212.37,419.83 L212.52,419.83 L212.67,419.83 L212.82,419.83 L212.97,419.83 L213.12,419.83 L213.27,419.83 L213.42,419.83 L213.57,419.83 L213.72,419.83 L213.87,419.83 L214.02,419.83 L214.17,419.83 L214.32,419.83 L214.47,419.83 L214.62,419.83 L214.77,419.83 L214.92,419.83 L215.07,419.83 L215.22,419.83 L215.37,419.83 L215.52,419.83 L215.67,419.83 L215.82,419.83 L215.97,419.83 L216.12,419.83 L216.27,419.83 L216.42,419.83 L216.56,419.83 L216.71,419.83 L216.86,419.83 L217.01,419.83 L217.16,419.83 L217.31,419.83 L217.46,419.83 L217.61,419.83 L217.76,419.83 L217.91,419.83 L218.06,419.83 L218.21,419.83 L218.36,419.83 L218.51,419.83 L218.66,419.83 L218.81,419.83 L218.96,419.83 L219.11,419.83 L219.26,419.83 L219.41,419.83 L219.56,419.83 L219.71,419.83 L219.86,419.83 L220.01,419.83 L220.16,419.83 L220.31,419.83 L220.46,419.83 L220.61,419.82 L220.76,419.82 L220.91,419.82 L221.06,419.82 L221.21,419.82 L221.36,419.82 L221.51,419.82 L221.66,419.82 L221.81,419.82 L221.96,419.82 L222.11,419.82 L222.26,419.82 L222.41,419.82 L222.56,419.82 L222.71,419.82 L222.86,419.82 L223.01,419.82 L223.16,419.82 L223.31,419.82 L223.46,419.82 L223.61,419.82 L223.76,419.82 L223.91,419.82 L224.06,419.82 L224.21,419.82 L224.36,419.82 L224.51,419.82 L224.66,419.82 L224.81,419.82 L224.96,419.82 L225.11,419.82 L225.26,419.82 L225.41,419.82 L225.56,419.82 L225.71,419.82 L225.86,419.82 L226.01,419.82 L226.16,419.82 L226.31,419.82 L226.46,419.82 L226.61,419.82 L226.76,419.82 L226.91,419.82 L227.06,419.82 L227.21,419.82 L227.36,419.82 L227.51,419.82 L227.66,419.82 L227.81,419.82 L227.96,419.82 L228.11,419.82 L228.26,419.82 L228.40,419.82 L228.55,419.82 L228.70,419.82 L228.85,419.82 L229.00,419.82 L229.15,419.82 L229.30,419.82 L229.45,419.82 L229.60,419.82 L229.75,419.82 L229.90,419.82 L230.05,419.82 L230.20,419.82 L230.35,419.82 L230.50,419.82 L230.65,419.82 L230.80,419.82 L230.95,419.82 L231.10,419.82 L231.25,419.82 L231.40,419.82 L231.55,419.82 L231.70,419.82 L231.85,419.82 L232.00,419.82 L232.15,419.82 L232.30,419.82 L232.45,419.82 L232.60,419.82 L232.75,419.82 L232.90,419.82 L233.05,419.82 L233.20,419.82 L233.35,419.81 L233.50,419.81 L233.65,419.81 L233.80,419.81 L233.95,419.81 L234.10,419.81 L234.25,419.81 L234.40,419.81 L234.55,419.81 L234.70,419.81 L234.85,419.81 L235.00,419.81 L235.15,419.81 L235.30,419.81 L235.45,419.81 L235.60,419.81 L235.75,419.81 L235.90,419.81 L236.05,419.81 L236.20,419.81 L236.35,419.81 L236.50,419.81 L236.65,419.81 L236.80,419.81 L236.95,419.81 L237.10,419.81 L237.25,419.81 L237.40,419.81 L237.55,419.81 L237.70,419.81 L237.85,419.81 L238.00,419.81 L238.15,419.81 L238.30,419.81 L238.45,419.81 L238.60,419.81 L238.75,419.81 L238.90,419.81 L239.05,419.81 L239.20,419.81 L239.35,419.81 L239.50,419.81 L239.65,419.81 L239.80,419.81 L239.95,419.81 L240.10,419.81 L240.25,419.81 L240.40,419.81 L240.54,419.81 L240.69,419.81 L240.84,419.81 L240.99,419.81 L241.14,419.81 L241.29,419.81 L241.44,419.81 L241.59,419.81 L241.74,419.81 L241.89,419.81 L242.04,419.81 L242.19,419.81 L242.34,419.81 L242.49,419.81 L242.64,419.81 L242.79,419.81 L242.94,419.81 L243.09,419.81 L243.24,419.81 L243.39,419.81 L243.54,419.81 L243.69,419.81 L243.84,419.81 L243.99,419.81 L244.14,419.81 L244.29,419.81 L244.44,419.81 L244.59,419.81 L244.74,419.81 L244.89,419.81 L245.04,419.81 L245.19,419.81 L245.34,419.81 L245.49,419.81 L245.64,419.81 L245.79,419.81 L245.94,419.81 L246.09,419.81 L246.24,419.81 L246.39,419.81 L246.54,419.81 L246.69,419.81 L246.84,419.81 L246.99,419.81 L247.14,419.81 L247.29,419.81 L247.44,419.81 L247.59,419.81 L247.74,419.81 L247.89,419.81 L248.04,419.81 L248.19,419.81 L248.34,419.81 L248.49,419.81 L248.64,419.81 L248.79,419.81 L248.94,419.81 L249.09,419.81 L249.24,419.81 L249.39,419.81 L249.54,419.81 L249.69,419.81 L249.84,419.81 L249.99,419.81 L250.14,419.81 L250.29,419.81 L250.44,419.81 L250.59,419.81 L250.74,419.81 L250.89,419.81 L251.04,419.81 L251.19,419.81 L251.34,419.81 L251.49,419.81 L251.64,419.81 L251.79,419.81 L251.94,419.81 L252.09,419.81 L252.24,419.81 L252.38,419.81 L252.53,419.81 L252.68,419.81 L252.83,419.81 L252.98,419.81 L253.13,419.81 L253.28,419.81 L253.43,419.81 L253.58,419.81 L253.73,419.81 L253.88,419.81 L254.03,419.81 L254.18,419.81 L254.33,419.81 L254.48,419.81 L254.63,419.81 L254.78,419.81 L254.93,419.81 L255.08,419.81 L255.23,419.81 L255.38,419.81 L255.53,419.81 L255.68,419.81 L255.83,419.81 L255.98,419.81 L256.13,419.81 L256.28,419.81 L256.43,419.81 L256.58,419.81 L256.73,419.81 L256.88,419.81 L257.03,419.81 L257.18,419.81 L257.33,419.81 L257.48,419.81 L257.63,419.81 L257.78,419.81 L257.93,419.81 L258.08,419.81 L258.23,419.81 L258.38,419.81 L258.53,419.81 L258.68,419.81 L258.83,419.81 L258.98,419.81 L259.13,419.81 L259.28,419.81 L259.43,419.80 L259.58,419.80 L259.73,419.80 L259.88,419.80 L260.03,419.80 L260.18,419.80 L260.33,419.80 L260.48,419.80 L260.63,419.80 L260.78,419.80 L260.93,419.80 L261.08,419.79 L261.23,419.79 L261.38,419.79 L261.53,419.78 L261.68,419.77 L261.83,419.75 L261.98,419.71 L262.13,419.66 L262.28,419.58 L262.43,419.45 L262.58,419.25 L262.73,418.96 L262.88,418.53 L263.03,417.92 L263.18,417.05 L263.33,415.87 L263.48,414.28 L263.63,412.19 L263.78,409.51 L263.93,406.15 L264.08,402.02 L264.23,397.10 L264.38,391.36 L264.52,384.84 L264.67,377.66 L264.82,369.96 L264.97,361.99 L265.12,354.02 L265.27,346.37 L265.42,339.41 L265.57,333.46 L265.72,328.85 L265.87,325.81 L266.02,324.53 L266.17,324.71 L266.32,325.05 L266.47,325.46 L266.62,325.94 L266.77,326.51 L266.92,327.15 L267.07,327.86 L267.22,328.64 L267.37,329.49 L267.52,330.42 L267.67,331.41 L267.82,332.46 L267.97,333.58 L268.12,334.75 L268.27,335.98 L268.42,337.27 L268.57,338.61 L268.72,339.99 L268.87,341.42 L269.02,342.90 L269.17,344.41 L269.32,345.95 L269.47,347.53 L269.62,349.13 L269.77,350.76 L269.92,352.42 L270.07,354.09 L270.22,355.77 L270.37,357.46 L270.52,359.17 L270.67,360.87 L270.82,362.58 L270.97,364.28 L271.12,365.99 L271.27,367.68 L271.42,369.36 L271.57,371.03 L271.72,372.68 L271.87,374.32 L272.02,375.93 L272.17,377.52 L272.32,379.09 L272.47,380.63 L272.62,382.14 L272.77,383.62 L272.92,385.07 L273.07,386.48 L273.22,387.87 L273.37,389.21 L273.52,390.52 L273.67,391.80 L273.82,393.04 L273.97,394.24 L274.12,395.40 L274.27,396.53 L274.42,397.62 L274.57,398.67 L274.72,399.68 L274.87,400.65 L275.02,401.59 L275.17,402.49 L275.32,403.35 L275.47,404.17 L275.62,404.97 L275.77,405.72 L275.92,406.44 L276.07,407.13 L276.22,407.79 L276.37,408.42 L276.51,409.01 L276.66,409.58 L276.81,410.11 L276.96,410.62 L277.11,411.10 L277.26,411.56 L277.41,411.99 L277.56,412.40 L277.71,412.78 L277.86,413.15 L278.01,413.49 L278.16,413.81 L278.31,414.11 L278.46,414.40 L278.61,414.66 L278.76,414.91 L278.91,415.15 L279.06,415.37 L279.21,415.58 L279.36,415.77 L279.51,415.95 L279.66,416.12 L279.81,416.28 L279.96,416.42 L280.11,416.56 L280.26,416.69 L280.41,416.81 L280.56,416.92 L280.71,417.03 L280.86,417.12 L281.01,417.21 L281.16,417.30 L281.31,417.38 L281.46,417.45 L281.61,417.52 L281.76,417.58 L281.91,417.64 L282.06,417.70 L282.21,417.75 L282.36,417.80 L282.51,417.85 L282.66,417.89 L282.81,417.93 L282.96,417.96 L283.11,418.00 L283.26,418.03 L283.41,418.06 L283.56,418.09 L283.71,418.12 L283.86,418.14 L284.01,418.17 L284.16,418.19 L284.31,418.21 L284.46,418.23 L284.61,418.25 L284.76,418.27 L284.91,418.29 L285.06,418.30 L285.21,418.32 L285.36,418.33 L285.51,418.35 L285.66,418.36 L285.81,418.37 L285.96,418.38 L286.11,418.40 L286.26,418.41 L286.41,418.42 L286.56,418.43 L286.71,418.44 L286.86,418.45 L287.01,418.45 L287.16,418.46 L287.31,418.47 L287.46,418.48 L287.61,418.49 L287.76,418.49 L287.91,418.50 L288.06,418.51 L288.21,418.51 L288.36,418.52 L288.50,418.52 L288.65,418.52 L288.80,418.52 L288.95,418.50 L289.10,418.47 L289.25,418.39 L289.40,418.24 L289.55,417.97 L289.70,417.50 L289.85,416.69 L290.00,415.38 L290.15,413.30 L290.30,410.15 L290.45,405.54 L290.60,399.02 L290.75,390.18 L290.90,378.63 L291.05,364.15 L291.20,346.74 L291.35,326.75 L291.50,304.87 L291.65,282.20 L291.80,260.15 L291.95,240.31 L292.10,224.28 L292.25,213.46 L292.40,208.83 L292.55,210.13 L292.70,214.13 L292.85,220.46 L293.00,228.93 L293.15,239.24 L293.30,251.06 L293.45,264.00 L293.60,277.67 L293.75,291.68 L293.90,305.66 L294.05,319.30 L294.20,332.30 L294.35,344.46 L294.50,355.62 L294.65,365.67 L294.80,374.57 L294.95,382.33 L295.10,388.98 L295.25,394.60 L295.40,399.28 L295.55,403.12 L295.70,406.24 L295.85,408.73 L296.00,410.70 L296.15,412.24 L296.30,413.44 L296.45,414.37 L296.60,415.08 L296.75,415.62 L296.90,416.04 L297.05,416.37 L297.20,416.62 L297.35,416.83 L297.50,416.99 L297.65,417.13 L297.80,417.24 L297.95,417.34 L298.10,417.43 L298.25,417.51 L298.40,417.58 L298.55,417.65 L298.70,417.71 L298.85,417.76 L299.00,417.82 L299.15,417.87 L299.30,417.91 L299.45,417.96 L299.60,418.00 L299.75,418.04 L299.90,418.07 L300.05,418.11 L300.20,418.14 L300.34,418.17 L300.49,418.19 L300.64,418.22 L300.79,418.25 L300.94,418.27 L301.09,418.29 L301.24,418.31 L301.39,418.33 L301.54,418.35 L301.69,418.36 L301.84,418.38 L301.99,418.40 L302.14,418.41 L302.29,418.42 L302.44,418.43 L302.59,418.45 L302.74,418.46 L302.89,418.47 L303.04,418.48 L303.19,418.49 L303.34,418.50 L303.49,418.50 L303.64,418.51 L303.79,418.52 L303.94,418.53 L304.09,418.53 L304.24,418.54 L304.39,418.54 L304.54,418.55 L304.69,418.55 L304.84,418.56 L304.99,418.56 L305.14,418.57 L305.29,418.57 L305.44,418.58 L305.59,418.58 L305.74,418.59 L305.89,418.59 L306.04,418.59 L306.19,418.60 L306.34,418.60 L306.49,418.60 L306.64,418.61 L306.79,418.61 L306.94,418.61 L307.09,418.61 L307.24,418.62 L307.39,418.62 L307.54,418.62 L307.69,418.62 L307.84,418.62 L307.99,418.62 L308.14,418.62 L308.29,418.63 L308.44,418.63 L308.59,418.63 L308.74,418.63 L308.89,418.63 L309.04,418.63 L309.19,418.63 L309.34,418.63 L309.49,418.63 L309.64,418.63 L309.79,418.63 L309.94,418.63 L310.09,418.63 L310.24,418.63 L310.39,418.63 L310.54,418.62 L310.69,418.62 L310.84,418.62 L310.99,418.62 L311.14,418.62 L311.29,418.62 L311.44,418.62 L311.59,418.62 L311.74,418.62 L311.89,418.61 L312.04,418.61 L312.19,418.61 L312.34,418.61 L312.48,418.61 L312.63,418.61 L312.78,418.60 L312.93,418.60 L313.08,418.60 L313.23,418.60 L313.38,418.60 L313.53,418.59 L313.68,418.59 L313.83,418.59 L313.98,418.59 L314.13,418.58 L314.28,418.58 L314.43,418.58 L314.58,418.58 L314.73,418.57 L314.88,418.57 L315.03,418.57 L315.18,418.57 L315.33,418.56 L315.48,418.56 L315.63,418.56 L315.78,418.55 L315.93,418.55 L316.08,418.55 L316.23,418.55 L316.38,418.54 L316.53,418.54 L316.68,418.54 L316.83,418.53 L316.98,418.53 L317.13,418.52 L317.28,418.52 L317.43,418.51 L317.58,418.50 L317.73,418.48 L317.88,418.44 L318.03,418.38 L318.18,418.28 L318.33,418.11 L318.48,417.83 L318.63,417.39 L318.78,416.70 L318.93,415.64 L319.08,414.08 L319.23,411.83 L319.38,408.68 L319.53,404.38 L319.68,398.68 L319.83,391.35 L319.98,382.20 L320.13,371.15 L320.28,358.21 L320.43,343.58 L320.58,327.65 L320.73,310.99 L320.88,294.34 L321.03,278.57 L321.18,264.59 L321.33,253.30 L321.48,245.46 L321.63,241.61 L321.78,241.94 L321.93,244.14 L322.08,247.64 L322.23,252.35 L322.38,258.20 L322.53,265.05 L322.68,272.75 L322.83,281.15 L322.98,290.07 L323.13,299.35 L323.28,308.82 L323.43,318.30 L323.58,327.66 L323.73,336.76 L323.88,345.49 L324.03,353.76 L324.18,361.49 L324.33,368.63 L324.47,375.16 L324.62,381.06 L324.77,386.34 L324.92,391.01 L325.07,395.11 L325.22,398.67 L325.37,401.73 L325.52,404.34 L325.67,406.55 L325.82,408.41 L325.97,409.96 L326.12,411.24 L326.27,412.29 L326.42,413.15 L326.57,413.86 L326.72,414.43 L326.87,414.90 L327.02,415.28 L327.17,415.59 L327.32,415.85 L327.47,416.06 L327.62,416.24 L327.77,416.39 L327.92,416.51 L328.07,416.63 L328.22,416.72 L328.37,416.81 L328.52,416.89 L328.67,416.96 L328.82,417.02 L328.97,417.08 L329.12,417.14 L329.27,417.19 L329.42,417.24 L329.57,417.29 L329.72,417.33 L329.87,417.37 L330.02,417.41 L330.17,417.45 L330.32,417.48 L330.47,417.51 L330.62,417.54 L330.77,417.57 L330.92,417.60 L331.07,417.62 L331.22,417.65 L331.37,417.67 L331.52,417.69 L331.67,417.71 L331.82,417.73 L331.97,417.75 L332.12,417.77 L332.27,417.78 L332.42,417.80 L332.57,417.81 L332.72,417.82 L332.87,417.84 L333.02,417.85 L333.17,417.86 L333.32,417.87 L333.47,417.88 L333.62,417.89 L333.77,417.90 L333.92,417.90 L334.07,417.91 L334.22,417.92 L334.37,417.92 L334.52,417.93 L334.67,417.94 L334.82,417.94 L334.97,417.95 L335.12,417.95 L335.27,417.95 L335.42,417.96 L335.57,417.96 L335.72,417.96 L335.87,417.97 L336.02,417.97 L336.17,417.97 L336.32,417.98 L336.46,417.98 L336.61,417.98 L336.76,417.98 L336.91,417.98 L337.06,417.98 L337.21,417.99 L337.36,417.99 L337.51,417.99 L337.66,417.99 L337.81,417.99 L337.96,417.99 L338.11,417.99 L338.26,417.99 L338.41,417.99 L338.56,417.99 L338.71,417.99 L338.86,417.99 L339.01,418.00 L339.16,418.00 L339.31,418.00 L339.46,418.00 L339.61,418.00 L339.76,418.00 L339.91,418.00 L340.06,418.00 L340.21,418.00 L340.36,418.00 L340.51,418.00 L340.66,418.00 L340.81,418.00 L340.96,418.00 L341.11,418.00 L341.26,418.00 L341.41,418.00 L341.56,418.00 L341.71,418.00 L341.86,418.00 L342.01,418.00 L342.16,418.00 L342.31,418.00 L342.46,418.00 L342.61,418.00 L342.76,418.00 L342.91,418.01 L343.06,418.01 L343.21,418.01 L343.36,418.01 L343.51,418.01 L343.66,418.01 L343.81,418.01 L343.96,418.01 L344.11,418.01 L344.26,418.01 L344.41,418.01 L344.56,418.01 L344.71,418.01 L344.86,418.01 L345.01,418.01 L345.16,418.01 L345.31,418.00 L345.46,418.00 L345.61,418.00 L345.76,418.00 L345.91,418.00 L346.06,418.00 L346.21,418.00 L346.36,418.00 L346.51,418.00 L346.66,418.00 L346.81,418.00 L346.96,418.00 L347.11,418.00 L347.26,418.00 L347.41,418.00 L347.56,418.00 L347.71,418.00 L347.86,417.99 L348.01,417.99 L348.16,417.99 L348.31,417.99 L348.45,417.99 L348.60,417.99 L348.75,417.99 L348.90,417.99 L349.05,417.99 L349.20,417.99 L349.35,417.98 L349.50,417.98 L349.65,417.98 L349.80,417.98 L349.95,417.98 L350.10,417.98 L350.25,417.98 L350.40,417.98 L350.55,417.97 L350.70,417.97 L350.85,417.97 L351.00,417.97 L351.15,417.97 L351.30,417.97 L351.45,417.97 L351.60,417.96 L351.75,417.96 L351.90,417.96 L352.05,417.96 L352.20,417.96 L352.35,417.96 L352.50,417.95 L352.65,417.95 L352.80,417.95 L352.95,417.95 L353.10,417.95 L353.25,417.95 L353.40,417.94 L353.55,417.94 L353.70,417.94 L353.85,417.94 L354.00,417.94 L354.15,417.93 L354.30,417.93 L354.45,417.93 L354.60,417.93 L354.75,417.93 L354.90,417.92 L355.05,417.92 L355.20,417.92 L355.35,417.92 L355.50,417.92 L355.65,417.91 L355.80,417.91 L355.95,417.91 L356.10,417.91 L356.25,417.91 L356.40,417.90 L356.55,417.90 L356.70,417.90 L356.85,417.90 L357.00,417.89 L357.15,417.89 L357.30,417.89 L357.45,417.89 L357.60,417.89 L357.75,417.88 L357.90,417.88 L358.05,417.88 L358.20,417.88 L358.35,417.87 L358.50,417.87 L358.65,417.87 L358.80,417.87 L358.95,417.86 L359.10,417.86 L359.25,417.86 L359.40,417.86 L359.55,417.85 L359.70,417.85 L359.85,417.85 L360.00,417.84 L360.15,417.84 L360.30,417.84 L360.44,417.84 L360.59,417.83 L360.74,417.83 L360.89,417.83 L361.04,417.83 L361.19,417.82 L361.34,417.82 L361.49,417.82 L361.64,417.81 L361.79,417.81 L361.94,417.81 L362.09,417.81 L362.24,417.80 L362.39,417.80 L362.54,417.80 L362.69,417.79 L362.84,417.79 L362.99,417.79 L363.14,417.79 L363.29,417.78 L363.44,417.78 L363.59,417.78 L363.74,417.77 L363.89,417.77 L364.04,417.77 L364.19,417.76 L364.34,417.76 L364.49,417.76 L364.64,417.75 L364.79,417.75 L364.94,417.75 L365.09,417.74 L365.24,417.74 L365.39,417.74 L365.54,417.73 L365.69,417.73 L365.84,417.73 L365.99,417.73 L366.14,417.72 L366.29,417.72 L366.44,417.72 L366.59,417.71 L366.74,417.71 L366.89,417.70 L367.04,417.70 L367.19,417.70 L367.34,417.69 L367.49,417.69 L367.64,417.69 L367.79,417.68 L367.94,417.68 L368.09,417.68 L368.24,417.67 L368.39,417.67 L368.54,417.67 L368.69,417.66 L368.84,417.66 L368.99,417.66 L369.14,417.65 L369.29,417.65 L369.44,417.65 L369.59,417.64 L369.74,417.64 L369.89,417.63 L370.04,417.63 L370.19,417.63 L370.34,417.62 L370.49,417.62 L370.64,417.62 L370.79,417.61 L370.94,417.61 L371.09,417.61 L371.24,417.60 L371.39,417.60 L371.54,417.59 L371.69,417.59 L371.84,417.59 L371.99,417.58 L372.14,417.58 L372.29,417.58 L372.43,417.57 L372.58,417.57 L372.73,417.56 L372.88,417.56 L373.03,417.56 L373.18,417.55 L373.33,417.55 L373.48,417.54 L373.63,417.54 L373.78,417.54 L373.93,417.53 L374.08,417.53 L374.23,417.52 L374.38,417.52 L374.53,417.52 L374.68,417.51 L374.83,417.51 L374.98,417.50 L375.13,417.50 L375.28,417.50 L375.43,417.49 L375.58,417.49 L375.73,417.48 L375.88,417.48 L376.03,417.48 L376.18,417.47 L376.33,417.47 L376.48,417.46 L376.63,417.46 L376.78,417.46 L376.93,417.45 L377.08,417.45 L377.23,417.44 L377.38,417.44 L377.53,417.44 L377.68,417.43 L377.83,417.43 L377.98,417.42 L378.13,417.42 L378.28,417.41 L378.43,417.41 L378.58,417.41 L378.73,417.40 L378.88,417.40 L379.03,417.39 L379.18,417.39 L379.33,417.39 L379.48,417.38 L379.63,417.38 L379.78,417.37 L379.93,417.37 L380.08,417.36 L380.23,417.36 L380.38,417.36 L380.53,417.35 L380.68,417.35 L380.83,417.34 L380.98,417.34 L381.13,417.33 L381.28,417.33 L381.43,417.33 L381.58,417.32 L381.73,417.32 L381.88,417.31 L382.03,417.31 L382.18,417.30 L382.33,417.30 L382.48,417.30 L382.63,417.29 L382.78,417.29 L382.93,417.28 L383.08,417.28 L383.23,417.27 L383.38,417.27 L383.53,417.27 L383.68,417.26 L383.83,417.26 L383.98,417.25 L384.13,417.25 L384.28,417.24 L384.42,417.24 L384.57,417.24 L384.72,417.23 L384.87,417.23 L385.02,417.22 L385.17,417.22 L385.32,417.21 L385.47,417.21 L385.62,417.20 L385.77,417.20 L385.92,417.20 L386.07,417.19 L386.22,417.19 L386.37,417.18 L386.52,417.18 L386.67,417.17 L386.82,417.17 L386.97,417.16 L387.12,417.16 L387.27,417.16 L387.42,417.15 L387.57,417.15 L387.72,417.14 L387.87,417.14 L388.02,417.13 L388.17,417.13 L388.32,417.12 L388.47,417.12 L388.62,417.12 L388.77,417.11 L388.92,417.11 L389.07,417.10 L389.22,417.10 L389.37,417.09 L389.52,417.09 L389.67,417.08 L389.82,417.08 L389.97,417.08 L390.12,417.07 L390.27,417.07 L390.42,417.06 L390.57,417.06 L390.72,417.05 L390.87,417.05 L391.02,417.05 L391.17,417.04 L391.32,417.04 L391.47,417.03 L391.62,417.03 L391.77,417.02 L391.92,417.02 L392.07,417.01 L392.22,417.01 L392.37,417.01 L392.52,417.00 L392.67,417.00 L392.82,416.99 L392.97,416.99 L393.12,416.98 L393.27,416.98 L393.42,416.97 L393.57,416.97 L393.72,416.97 L393.87,416.96 L394.02,416.96 L394.17,416.95 L394.32,416.95 L394.47,416.94 L394.62,416.94 L394.77,416.93 L394.92,416.93 L395.07,416.93 L395.22,416.92 L395.37,416.92 L395.52,416.91 L395.67,416.91 L395.82,416.90 L395.97,416.90 L396.12,416.89 L396.27,416.89 L396.41,416.89 L396.56,416.88 L396.71,416.88 L396.86,416.87 L397.01,416.87 L397.16,416.86 L397.31,416.86 L397.46,416.86 L397.61,416.85 L397.76,416.85 L397.91,416.84 L398.06,416.84 L398.21,416.83 L398.36,416.83 L398.51,416.83 L398.66,416.82 L398.81,416.82 L398.96,416.81 L399.11,416.81 L399.26,416.80 L399.41,416.80 L399.56,416.80 L399.71,416.79 L399.86,416.79 L400.01,416.78 L400.16,416.78 L400.31,416.77 L400.46,416.77 L400.61,416.77 L400.76,416.76 L400.91,416.76 L401.06,416.75 L401.21,416.75 L401.36,416.74 L401.51,416.74 L401.66,416.74 L401.81,416.73 L401.96,416.73 L402.11,416.72 L402.26,416.72 L402.41,416.72 L402.56,416.71 L402.71,416.71 L402.86,416.70 L403.01,416.70 L403.16,416.69 L403.31,416.69 L403.46,416.69 L403.61,416.68 L403.76,416.68 L403.91,416.67 L404.06,416.67 L404.21,416.67 L404.36,416.66 L404.51,416.66 L404.66,416.65 L404.81,416.65 L404.96,416.65 L405.11,416.64 L405.26,416.64 L405.41,416.63 L405.56,416.63 L405.71,416.63 L405.86,416.62 L406.01,416.62 L406.16,416.61 L406.31,416.61 L406.46,416.61 L406.61,416.60 L406.76,416.60 L406.91,416.59 L407.06,416.59 L407.21,416.59 L407.36,416.58 L407.51,416.58 L407.66,416.57 L407.81,416.57 L407.96,416.57 L408.11,416.56 L408.26,416.56 L408.40,416.56 L408.55,416.55 L408.70,416.55 L408.85,416.54 L409.00,416.54 L409.15,416.54 L409.30,416.53 L409.45,416.53 L409.60,416.53 L409.75,416.52 L409.90,416.52 L410.05,416.51 L410.20,416.51 L410.35,416.51 L410.50,416.50 L410.65,416.50 L410.80,416.50 L410.95,416.49 L411.10,416.49 L411.25,416.49 L411.40,416.48 L411.55,416.48 L411.70,416.47 L411.85,416.47 L412.00,416.47 L412.15,416.46 L412.30,416.46 L412.45,416.46 L412.60,416.45 L412.75,416.45 L412.90,416.45 L413.05,416.44 L413.20,416.44 L413.35,416.44 L413.50,416.43 L413.65,416.43 L413.80,416.43 L413.95,416.42 L414.10,416.42 L414.25,416.42 L414.40,416.41 L414.55,416.41 L414.70,416.41 L414.85,416.40 L415.00,416.40 L415.15,416.40 L415.30,416.39 L415.45,416.39 L415.60,416.39 L415.75,416.38 L415.90,416.38 L416.05,416.38 L416.20,416.37 L416.35,416.37 L416.50,416.37 L416.65,416.36 L416.80,416.36 L416.95,416.36 L417.10,416.36 L417.25,416.35 L417.40,416.35 L417.55,416.35 L417.70,416.34 L417.85,416.34 L418.00,416.34 L418.15,416.33 L418.30,416.33 L418.45,416.33 L418.60,416.33 L418.75,416.32 L418.90,416.32 L419.05,416.32 L419.20,416.31 L419.35,416.31 L419.50,416.31 L419.65,416.31 L419.80,416.30 L419.95,416.30 L420.10,416.30 L420.25,416.29 L420.39,416.29 L420.54,416.29 L420.69,416.29 L420.84,416.28 L420.99,416.28 L421.14,416.28 L421.29,416.28 L421.44,416.27 L421.59,416.27 L421.74,416.27 L421.89,416.27 L422.04,416.26 L422.19,416.26 L422.34,416.26 L422.49,416.26 L422.64,416.25 L422.79,416.25 L422.94,416.25 L423.09,416.25 L423.24,416.24 L423.39,416.24 L423.54,416.24 L423.69,416.24 L423.84,416.24 L423.99,416.23 L424.14,416.23 L424.29,416.23 L424.44,416.23 L424.59,416.22 L424.74,416.22 L424.89,416.22 L425.04,416.22 L425.19,416.22 L425.34,416.21 L425.49,416.21 L425.64,416.21 L425.79,416.21 L425.94,416.21 L426.09,416.20 L426.24,416.20 L426.39,416.20 L426.54,416.20 L426.69,416.20 L426.84,416.19 L426.99,416.19 L427.14,416.19 L427.29,416.19 L427.44,416.19 L427.59,416.18 L427.74,416.18 L427.89,416.18 L428.04,416.18 L428.19,416.18 L428.34,416.18 L428.49,416.17 L428.64,416.17 L428.79,416.17 L428.94,416.17 L429.09,416.17 L429.24,416.17 L429.39,416.17 L429.54,416.16 L429.69,416.16 L429.84,416.16 L429.99,416.16 L430.14,416.16 L430.29,416.16 L430.44,416.16 L430.59,416.15 L430.74,416.15 L430.89,416.15 L431.04,416.15 L431.19,416.15 L431.34,416.15 L431.49,416.15 L431.64,416.15 L431.79,416.14 L431.94,416.14 L432.09,416.14 L432.24,416.14 L432.38,416.14 L432.53,416.14 L432.68,416.14 L432.83,416.14 L432.98,416.14 L433.13,416.14 L433.28,416.13 L433.43,416.13 L433.58,416.13 L433.73,416.13 L433.88,416.13 L434.03,416.13 L434.18,416.13 L434.33,416.13 L434.48,416.13 L434.63,416.13 L434.78,416.13 L434.93,416.13 L435.08,416.13 L435.23,416.13 L435.38,416.12 L435.53,416.12 L435.68,416.12 L435.83,416.12 L435.98,416.12 L436.13,416.12 L436.28,416.12 L436.43,416.12 L436.58,416.12 L436.73,416.12 L436.88,416.12 L437.03,416.12 L437.18,416.12 L437.33,416.12 L437.48,416.12 L437.63,416.12 L437.78,416.12 L437.93,416.12 L438.08,416.12 L438.23,416.12 L438.38,416.12 L438.53,416.12 L438.68,416.12 L438.83,416.12 L438.98,416.12 L439.13,416.12 L439.28,416.12 L439.43,416.12 L439.58,416.12 L439.73,416.12 L439.88,416.12 L440.03,416.12 L440.18,416.12 L440.33,416.12 L440.48,416.12 L440.63,416.12 L440.78,416.12 L440.93,416.12 L441.08,416.12 L441.23,416.12 L441.38,416.12 L441.53,416.12 L441.68,416.12 L441.83,416.12 L441.98,416.12 L442.13,416.12 L442.28,416.12 L442.43,416.12 L442.58,416.12 L442.73,416.12 L442.88,416.12 L443.03,416.12 L443.18,416.12 L443.33,416.12 L443.48,416.12 L443.63,416.12 L443.78,416.12 L443.93,416.11 L444.08,416.11 L444.23,416.11 L444.37,416.11 L444.52,416.11 L444.67,416.11 L444.82,416.11 L444.97,416.11 L445.12,416.11 L445.27,416.11 L445.42,416.11 L445.57,416.11 L445.72,416.11 L445.87,416.11 L446.02,416.10 L446.17,416.09 L446.32,416.07 L446.47,416.03 L446.62,415.97 L446.77,415.86 L446.92,415.68 L447.07,415.39 L447.22,414.92 L447.37,414.19 L447.52,413.10 L447.67,411.49 L447.82,409.20 L447.97,406.02 L448.12,401.74 L448.27,396.13 L448.42,389.00 L448.57,380.22 L448.72,369.73 L448.87,357.62 L449.02,344.14 L449.17,329.68 L449.32,314.81 L449.47,300.26 L449.62,286.80 L449.77,275.27 L449.92,266.41 L450.07,260.82 L450.22,258.91 L450.37,260.29 L450.52,262.71 L450.67,266.15 L450.82,270.54 L450.97,275.80 L451.12,281.83 L451.27,288.51 L451.42,295.72 L451.57,303.32 L451.72,311.17 L451.87,319.15 L452.02,327.14 L452.17,335.01 L452.32,342.67 L452.47,350.02 L452.62,357.00 L452.77,363.54 L452.92,369.62 L453.07,375.20 L453.22,380.28 L453.37,384.85 L453.52,388.93 L453.67,392.54 L453.82,395.70 L453.97,398.45 L454.12,400.83 L454.27,402.86 L454.42,404.60 L454.57,406.07 L454.72,407.31 L454.87,408.35 L455.02,409.22 L455.17,409.95 L455.32,410.56 L455.47,411.07 L455.62,411.50 L455.77,411.87 L455.92,412.18 L456.07,412.44 L456.22,412.67 L456.36,412.88 L456.51,413.06 L456.66,413.22 L456.81,413.36 L456.96,413.50 L457.11,413.62 L457.26,413.73 L457.41,413.84 L457.56,413.94 L457.71,414.03 L457.86,414.12 L458.01,414.21 L458.16,414.29 L458.31,414.37 L458.46,414.44 L458.61,414.51 L458.76,414.58 L458.91,414.64 L459.06,414.70 L459.21,414.76 L459.36,414.82 L459.51,414.87 L459.66,414.92 L459.81,414.97 L459.96,415.02 L460.11,415.06 L460.26,415.10 L460.41,415.14 L460.56,415.18 L460.71,415.22 L460.86,415.26 L461.01,415.29 L461.16,415.32 L461.31,415.35 L461.46,415.38 L461.61,415.41 L461.76,415.44 L461.91,415.46 L462.06,415.49 L462.21,415.51 L462.36,415.53 L462.51,415.55 L462.66,415.57 L462.81,415.59 L462.96,415.61 L463.11,415.63 L463.26,415.65 L463.41,415.66 L463.56,415.68 L463.71,415.69 L463.86,415.71 L464.01,415.72 L464.16,415.73 L464.31,415.74 L464.46,415.75 L464.61,415.77 L464.76,415.78 L464.91,415.79 L465.06,415.80 L465.21,415.80 L465.36,415.81 L465.51,415.82 L465.66,415.83 L465.81,415.84 L465.96,415.84 L466.11,415.85 L466.26,415.86 L466.41,415.86 L466.56,415.87 L466.71,415.87 L466.86,415.88 L467.01,415.88 L467.16,415.89 L467.31,415.89 L467.46,415.90 L467.61,415.90 L467.76,415.90 L467.91,415.91 L468.06,415.91 L468.21,415.91 L468.35,415.92 L468.50,415.92 L468.65,415.92 L468.80,415.92 L468.95,415.92 L469.10,415.93 L469.25,415.93 L469.40,415.93 L469.55,415.93 L469.70,415.93 L469.85,415.94 L470.00,415.94 L470.15,415.94 L470.30,415.94 L470.45,415.94 L470.60,415.94 L470.75,415.94 L470.90,415.94 L471.05,415.94 L471.20,415.94 L471.35,415.94 L471.50,415.94 L471.65,415.94 L471.80,415.95 L471.95,415.95 L472.10,415.95 L472.25,415.95 L472.40,415.95 L472.55,415.95 L472.70,415.95 L472.85,415.95 L473.00,415.95 L473.15,415.95 L473.30,415.95 L473.45,415.94 L473.60,415.94 L473.75,415.94 L473.90,415.94 L474.05,415.94 L474.20,415.94 L474.35,415.94 L474.50,415.94 L474.65,415.94 L474.80,415.94 L474.95,415.94 L475.10,415.94 L475.25,415.94 L475.40,415.94 L475.55,415.94 L475.70,415.94 L475.85,415.94 L476.00,415.94 L476.15,415.93 L476.30,415.93 L476.45,415.93 L476.60,415.93 L476.75,415.93 L476.90,415.93 L477.05,415.93 L477.20,415.93 L477.35,415.93 L477.50,415.93 L477.65,415.92 L477.80,415.92 L477.95,415.92 L478.10,415.91 L478.25,415.91 L478.40,415.90 L478.55,415.90 L478.70,415.88 L478.85,415.87 L479.00,415.85 L479.15,415.82 L479.30,415.79 L479.45,415.75 L479.60,415.70 L479.75,415.63 L479.90,415.55 L480.05,415.44 L480.19,415.32 L480.34,415.18 L480.49,415.00 L480.64,414.80 L480.79,414.58 L480.94,414.32 L481.09,414.03 L481.24,413.72 L481.39,413.37 L481.54,413.01 L481.69,412.64 L481.84,412.25 L481.99,411.86 L482.14,411.48 L482.29,411.11 L482.44,410.77 L482.59,410.47 L482.74,410.21 L482.89,410.00 L483.04,409.85 L483.19,409.76 L483.34,409.75 L483.49,409.82 L483.64,409.90 L483.79,410.00 L483.94,410.11 L484.09,410.23 L484.24,410.37 L484.39,410.52 L484.54,410.68 L484.69,410.85 L484.84,411.02 L484.99,411.21 L485.14,411.40 L485.29,411.59 L485.44,411.79 L485.59,411.98 L485.74,412.18 L485.89,412.38 L486.04,412.57 L486.19,412.76 L486.34,412.94 L486.49,413.12 L486.64,413.30 L486.79,413.46 L486.94,413.62 L487.09,413.77 L487.24,413.92 L487.39,414.05 L487.54,414.18 L487.69,414.30 L487.84,414.41 L487.99,414.51 L488.14,414.61 L488.29,414.69 L488.44,414.77 L488.59,414.85 L488.74,414.92 L488.89,414.98 L489.04,415.03 L489.19,415.08 L489.34,415.13 L489.49,415.17 L489.64,415.21 L489.79,415.24 L489.94,415.28 L490.09,415.30 L490.24,415.33 L490.39,415.35 L490.54,415.37 L490.69,415.39 L490.84,415.41 L490.99,415.43 L491.14,415.44 L491.29,415.46 L491.44,415.47 L491.59,415.48 L491.74,415.49 L491.89,415.50 L492.04,415.51 L492.19,415.52 L492.33,415.53 L492.48,415.54 L492.63,415.55 L492.78,415.55 L492.93,415.56 L493.08,415.57 L493.23,415.57 L493.38,415.58 L493.53,415.59 L493.68,415.59 L493.83,415.60 L493.98,415.60 L494.13,415.61 L494.28,415.61 L494.43,415.62 L494.58,415.62 L494.73,415.63 L494.88,415.63 L495.03,415.63 L495.18,415.64 L495.33,415.64 L495.48,415.64 L495.63,415.65 L495.78,415.65 L495.93,415.65 L496.08,415.66 L496.23,415.66 L496.38,415.66 L496.53,415.67 L496.68,415.67 L496.83,415.67 L496.98,415.67 L497.13,415.67 L497.28,415.68 L497.43,415.68 L497.58,415.68 L497.73,415.68 L497.88,415.68 L498.03,415.69 L498.18,415.69 L498.33,415.69 L498.48,415.69 L498.63,415.69 L498.78,415.69 L498.93,415.69 L499.08,415.69 L499.23,415.70 L499.38,415.70 L499.53,415.70 L499.68,415.70 L499.83,415.70 L499.98,415.70 L500.13,415.70 L500.28,415.70 L500.43,415.70 L500.58,415.70 L500.73,415.70 L500.88,415.70 L501.03,415.70 L501.18,415.70 L501.33,415.70 L501.48,415.70 L501.63,415.70 L501.78,415.70 L501.93,415.70 L502.08,415.70 L502.23,415.70 L502.38,415.70 L502.53,415.70 L502.68,415.70 L502.83,415.70 L502.98,415.70 L503.13,415.70 L503.28,415.70 L503.43,415.70 L503.58,415.70 L503.73,415.70 L503.88,415.70 L504.03,415.70 L504.18,415.70 L504.32,415.70 L504.47,415.70 L504.62,415.70 L504.77,415.70 L504.92,415.70 L505.07,415.70 L505.22,415.70 L505.37,415.70 L505.52,415.70 L505.67,415.70 L505.82,415.70 L505.97,415.70 L506.12,415.70 L506.27,415.70 L506.42,415.70 L506.57,415.70 L506.72,415.70 L506.87,415.70 L507.02,415.69 L507.17,415.69 L507.32,415.69 L507.47,415.69 L507.62,415.69 L507.77,415.69 L507.92,415.69 L508.07,415.69 L508.22,415.69 L508.37,415.69 L508.52,415.69 L508.67,415.69 L508.82,415.69 L508.97,415.69 L509.12,415.69 L509.27,415.69 L509.42,415.68 L509.57,415.68 L509.72,415.68 L509.87,415.68 L510.02,415.68 L510.17,415.68 L510.32,415.68 L510.47,415.68 L510.62,415.68 L510.77,415.68 L510.92,415.68 L511.07,415.68 L511.22,415.68 L511.37,415.68 L511.52,415.67 L511.67,415.67 L511.82,415.67 L511.97,415.67 L512.12,415.67 L512.27,415.67 L512.42,415.67 L512.57,415.67 L512.72,415.67 L512.87,415.67 L513.02,415.67 L513.17,415.67 L513.32,415.67 L513.47,415.67 L513.62,415.67 L513.77,415.66 L513.92,415.66 L514.07,415.66 L514.22,415.66 L514.37,415.66 L514.52,415.66 L514.67,415.66 L514.82,415.66 L514.97,415.66 L515.12,415.66 L515.27,415.66 L515.42,415.66 L515.57,415.66 L515.72,415.66 L515.87,415.65 L516.02,415.65 L516.16,415.65 L516.31,415.65 L516.46,415.65 L516.61,415.65 L516.76,415.65 L516.91,415.65 L517.06,415.65 L517.21,415.65 L517.36,415.65 L517.51,415.65 L517.66,415.65 L517.81,415.65 L517.96,415.65 L518.11,415.64 L518.26,415.64 L518.41,415.64 L518.56,415.64 L518.71,415.64 L518.86,415.64 L519.01,415.64 L519.16,415.64 L519.31,415.64 L519.46,415.64 L519.61,415.64 L519.76,415.64 L519.91,415.64 L520.06,415.64 L520.21,415.64 L520.36,415.64 L520.51,415.64 L520.66,415.63 L520.81,415.63 L520.96,415.63 L521.11,415.63 L521.26,415.63 L521.41,415.63 L521.56,415.63 L521.71,415.63 L521.86,415.63 L522.01,415.63 L522.16,415.63 L522.31,415.63 L522.46,415.63 L522.61,415.63 L522.76,415.63 L522.91,415.63 L523.06,415.63 L523.21,415.63 L523.36,415.63 L523.51,415.63 L523.66,415.62 L523.81,415.62 L523.96,415.62 L524.11,415.62 L524.26,415.62 L524.41,415.62 L524.56,415.62 L524.71,415.62 L524.86,415.62 L525.01,415.62 L525.16,415.62 L525.31,415.62 L525.46,415.62 L525.61,415.62 L525.76,415.62 L525.91,415.62 L526.06,415.62 L526.21,415.62 L526.36,415.62 L526.51,415.62 L526.66,415.62 L526.81,415.62 L526.96,415.62 L527.11,415.62 L527.26,415.62 L527.41,415.62 L527.56,415.61 L527.71,415.61 L527.86,415.61 L528.01,415.61 L528.15,415.61 L528.30,415.61 L528.45,415.61 L528.60,415.61 L528.75,415.61 L528.90,415.61 L529.05,415.61 L529.20,415.61 L529.35,415.61 L529.50,415.61 L529.65,415.61 L529.80,415.61 L529.95,415.61 L530.10,415.61 L530.25,415.61 L530.40,415.61 L530.55,415.61 L530.70,415.61 L530.85,415.61 L531.00,415.61 L531.15,415.61 L531.30,415.61 L531.45,415.61 L531.60,415.61 L531.75,415.61 L531.90,415.61 L532.05,415.61 L532.20,415.61 L532.35,415.61 L532.50,415.61 L532.65,415.61 L532.80,415.61 L532.95,415.61 L533.10,415.61 L533.25,415.61 L533.40,415.61 L533.55,415.61 L533.70,415.61 L533.85,415.61 L534.00,415.61 L534.15,415.61 L534.30,415.61 L534.45,415.61 L534.60,415.61 L534.75,415.61 L534.90,415.61 L535.05,415.61 L535.20,415.61 L535.35,415.61 L535.50,415.61 L535.65,415.61 L535.80,415.61 L535.95,415.61 L536.10,415.61 L536.25,415.61 L536.40,415.61 L536.55,415.61 L536.70,415.61 L536.85,415.61 L537.00,415.61 L537.15,415.61 L537.30,415.61 L537.45,415.61 L537.60,415.61 L537.75,415.61 L537.90,415.61 L538.05,415.61 L538.20,415.61 L538.35,415.62 L538.50,415.62 L538.65,415.62 L538.80,415.62 L538.95,415.62 L539.10,415.62 L539.25,415.62 L539.40,415.62 L539.55,415.62 L539.70,415.62 L539.85,415.62 L540.00,415.62 L540.14,415.62 L540.29,415.62 L540.44,415.62 L540.59,415.63 L540.74,415.63 L540.89,415.63 L541.04,415.63 L541.19,415.63 L541.34,415.63 L541.49,415.63 L541.64,415.63 L541.79,415.63 L541.94,415.63 L542.09,415.63 L542.24,415.63 L542.39,415.64 L542.54,415.64 L542.69,415.64 L542.84,415.64 L542.99,415.64 L543.14,415.64 L543.29,415.64 L543.44,415.64 L543.59,415.64 L543.74,415.65 L543.89,415.65 L544.04,415.65 L544.19,415.65 L544.34,415.65 L544.49,415.65 L544.64,415.65 L544.79,415.65 L544.94,415.65 L545.09,415.66 L545.24,415.66 L545.39,415.66 L545.54,415.66 L545.69,415.66 L545.84,415.66 L545.99,415.66 L546.14,415.66 L546.29,415.67 L546.44,415.67 L546.59,415.67 L546.74,415.67 L546.89,415.67 L547.04,415.67 L547.19,415.67 L547.34,415.68 L547.49,415.68 L547.64,415.68 L547.79,415.68 L547.94,415.68 L548.09,415.68 L548.24,415.68 L548.39,415.69 L548.54,415.69 L548.69,415.69 L548.84,415.69 L548.99,415.69 L549.14,415.69 L549.29,415.70 L549.44,415.70 L549.59,415.70 L549.74,415.70 L549.89,415.70 L550.04,415.70 L550.19,415.71 L550.34,415.71 L550.49,415.71 L550.64,415.71 L550.79,415.71 L550.94,415.71 L551.09,415.72 L551.24,415.72 L551.39,415.72 L551.54,415.72 L551.69,415.72 L551.84,415.72 L551.99,415.73 L552.14,415.73 L552.28,415.73 L552.43,415.73 L552.58,415.73 L552.73,415.74 L552.88,415.74 L553.03,415.74 L553.18,415.74 L553.33,415.74 L553.48,415.74 L553.63,415.75 L553.78,415.75 L553.93,415.75 L554.08,415.75 L554.23,415.75 L554.38,415.76 L554.53,415.76 L554.68,415.76 L554.83,415.76 L554.98,415.76 L555.13,415.77 L555.28,415.77 L555.43,415.77 L555.58,415.77 L555.73,415.77 L555.88,415.78 L556.03,415.78 L556.18,415.78 L556.33,415.78 L556.48,415.78 L556.63,415.79 L556.78,415.79 L556.93,415.79 L557.08,415.79 L557.23,415.79 L557.38,415.80 L557.53,415.80 L557.68,415.80 L557.83,415.80 L557.98,415.80 L558.13,415.81 L558.28,415.81 L558.43,415.81 L558.58,415.81 L558.73,415.82 L558.88,415.82 L559.03,415.82 L559.18,415.82 L559.33,415.82 L559.48,415.83 L559.63,415.83 L559.78,415.83 L559.93,415.83 L560.08,415.84 L560.23,415.84 L560.38,415.84 L560.53,415.84 L560.68,415.84 L560.83,415.85 L560.98,415.85 L561.13,415.85 L561.28,415.85 L561.43,415.86 L561.58,415.86 L561.73,415.86 L561.88,415.86 L562.03,415.86 L562.18,415.87 L562.33,415.87 L562.48,415.87 L562.63,415.87 L562.78,415.88 L562.93,415.88 L563.08,415.88 L563.23,415.88 L563.38,415.89 L563.53,415.89 L563.68,415.89 L563.83,415.89 L563.98,415.89 L564.12,415.90 L564.27,415.90 L564.42,415.90 L564.57,415.90 L564.72,415.90 L564.87,415.90 L565.02,415.90 L565.17,415.90 L565.32,415.90 L565.47,415.89 L565.62,415.88 L565.77,415.87 L565.92,415.86 L566.07,415.84 L566.22,415.81 L566.37,415.78 L566.52,415.73 L566.67,415.67 L566.82,415.60 L566.97,415.50 L567.12,415.38 L567.27,415.24 L567.42,415.06 L567.57,414.83 L567.72,414.56 L567.87,414.24 L568.02,413.85 L568.17,413.39 L568.32,412.84 L568.47,412.20 L568.62,411.45 L568.77,410.59 L568.92,409.60 L569.07,408.48 L569.22,407.20 L569.37,405.78 L569.52,404.19 L569.67,402.44 L569.82,400.53 L569.97,398.45 L570.12,396.21 L570.27,393.82 L570.42,391.30 L570.57,388.65 L570.72,385.90 L570.87,383.08 L571.02,380.21 L571.17,377.32 L571.32,374.46 L571.47,371.66 L571.62,368.96 L571.77,366.39 L571.92,364.01 L572.07,361.84 L572.22,359.92 L572.37,358.29 L572.52,356.98 L572.67,356.00 L572.82,355.37 L572.97,355.12 L573.12,355.34 L573.27,355.66 L573.42,356.00 L573.57,356.38 L573.72,356.80 L573.87,357.24 L574.02,357.71 L574.17,358.22 L574.32,358.75 L574.47,359.32 L574.62,359.91 L574.77,360.53 L574.92,361.18 L575.07,361.85 L575.22,362.55 L575.37,363.27 L575.52,364.02 L575.67,364.78 L575.82,365.57 L575.97,366.38 L576.11,367.21 L576.26,368.05 L576.41,368.91 L576.56,369.78 L576.71,370.66 L576.86,371.56 L577.01,372.46 L577.16,373.38 L577.31,374.30 L577.46,375.23 L577.61,376.16 L577.76,377.10 L577.91,378.03 L578.06,378.97 L578.21,379.91 L578.36,380.84 L578.51,381.77 L578.66,382.70 L578.81,383.62 L578.96,384.53 L579.11,385.44 L579.26,386.34 L579.41,387.23 L579.56,388.10 L579.71,388.97 L579.86,389.82 L580.01,390.66 L580.16,391.49 L580.31,392.30 L580.46,393.10 L580.61,393.88 L580.76,394.64 L580.91,395.39 L581.06,396.12 L581.21,396.84 L581.36,397.53 L581.51,398.21 L581.66,398.88 L581.81,399.52 L581.96,400.15 L582.11,400.75 L582.26,401.34 L582.41,401.91 L582.56,402.47 L582.71,403.00 L582.86,403.52 L583.01,404.02 L583.16,404.50 L583.31,404.97 L583.46,405.42 L583.61,405.85 L583.76,406.27 L583.91,406.67 L584.06,407.05 L584.21,407.42 L584.36,407.78 L584.51,408.12 L584.66,408.44 L584.81,408.76 L584.96,409.05 L585.11,409.34 L585.26,409.61 L585.41,409.88 L585.56,410.13 L585.71,410.37 L585.86,410.59 L586.01,410.81 L586.16,411.02 L586.31,411.22 L586.46,411.41 L586.61,411.59 L586.76,411.76 L586.91,411.92 L587.06,412.08 L587.21,412.23 L587.36,412.37 L587.51,412.50 L587.66,412.63 L587.81,412.75 L587.96,412.87 L588.11,412.98 L588.25,413.09 L588.40,413.19 L588.55,413.28 L588.70,413.38 L588.85,413.46 L589.00,413.55 L589.15,413.63 L589.30,413.70 L589.45,413.78 L589.60,413.85 L589.75,413.91 L589.90,413.98 L590.05,414.04 L590.20,414.10 L590.35,414.15 L590.50,414.21 L590.65,414.26 L590.80,414.31 L590.95,414.36 L591.10,414.40 L591.25,414.45 L591.40,414.49 L591.55,414.53 L591.70,414.57 L591.85,414.61 L592.00,414.65 L592.15,414.68 L592.30,414.72 L592.45,414.75 L592.60,414.79 L592.75,414.82 L592.90,414.85 L593.05,414.88 L593.20,414.91 L593.35,414.94 L593.50,414.97 L593.65,414.99 L593.80,415.02 L593.95,415.05 L594.10,415.07 L594.25,415.10 L594.40,415.12 L594.55,415.14 L594.70,415.17 L594.85,415.19 L595.00,415.21 L595.15,415.23 L595.30,415.25 L595.45,415.28 L595.60,415.30 L595.75,415.32 L595.90,415.34 L596.05,415.35 L596.20,415.37 L596.35,415.39 L596.50,415.41 L596.65,415.43 L596.80,415.45 L596.95,415.46 L597.10,415.48 L597.25,415.50 L597.40,415.51 L597.55,415.53 L597.70,415.54 L597.85,415.56 L598.00,415.57 L598.15,415.59 L598.30,415.60 L598.45,415.62 L598.60,415.63 L598.75,415.64 L598.90,415.66 L599.05,415.67 L599.20,415.68 L599.35,415.70 L599.50,415.71 L599.65,415.72 L599.80,415.73 L599.95,415.75 L600.09,415.76 L600.24,415.77 L600.39,415.78 L600.54,415.79 L600.69,415.80 L600.84,415.81 L600.99,415.82 L601.14,415.83 L601.29,415.84 L601.44,415.85 L601.59,415.86 L601.74,415.87 L601.89,415.88 L602.04,415.89 L602.19,415.90 L602.34,415.91 L602.49,415.92 L602.64,415.93 L602.79,415.93 L602.94,415.94 L603.09,415.95 L603.24,415.96 L603.39,415.97 L603.54,415.97 L603.69,415.98 L603.84,415.99 L603.99,415.99 L604.14,416.00 L604.29,416.01 L604.44,416.02 L604.59,416.02 L604.74,416.03 L604.89,416.03 L605.04,416.04 L605.19,416.05 L605.34,416.05 L605.49,416.06 L605.64,416.06 L605.79,416.07 L605.94,416.08 L606.09,416.08 L606.24,416.09 L606.39,416.09 L606.54,416.10 L606.69,416.10 L606.84,416.11 L606.99,416.11 L607.14,416.12 L607.29,416.12 L607.44,416.13 L607.59,416.13 L607.74,416.14 L607.89,416.14 L608.04,416.14 L608.19,416.15 L608.34,416.15 L608.49,416.16 L608.64,416.16 L608.79,416.17 L608.94,416.17 L609.09,416.18 L609.24,416.18 L609.39,416.18 L609.54,416.19 L609.69,416.19 L609.84,416.20 L609.99,416.20 L610.14,416.21 L610.29,416.21 L610.44,416.21 L610.59,416.22 L610.74,416.22 L610.89,416.23 L611.04,416.23 L611.19,416.23 L611.34,416.24 L611.49,416.24 L611.64,416.25 L611.79,416.25 L611.94,416.25 L612.09,416.26 L612.23,416.26 L612.38,416.27 L612.53,416.27 L612.68,416.27 L612.83,416.28 L612.98,416.28 L613.13,416.28 L613.28,416.29 L613.43,416.29 L613.58,416.30 L613.73,416.30 L613.88,416.30 L614.03,416.31 L614.18,416.31 L614.33,416.31 L614.48,416.32 L614.63,416.32 L614.78,416.32 L614.93,416.33 L615.08,416.33 L615.23,416.34 L615.38,416.34 L615.53,416.34 L615.68,416.35 L615.83,416.35 L615.98,416.35 L616.13,416.36 L616.28,416.36 L616.43,416.36 L616.58,416.37 L616.73,416.37 L616.88,416.37 L617.03,416.38 L617.18,416.38 L617.33,416.38 L617.48,416.39 L617.63,416.39 L617.78,416.39 L617.93,416.40 L618.08,416.40 L618.23,416.40 L618.38,416.41 L618.53,416.41 L618.68,416.41 L618.83,416.42 L618.98,416.42 L619.13,416.43 L619.28,416.43 L619.43,416.43 L619.58,416.44 L619.73,416.44 L619.88,416.44 L620.03,416.45 L620.18,416.45 L620.33,416.45 L620.48,416.46 L620.63,416.46 L620.78,416.46 L620.93,416.47 L621.08,416.47 L621.23,416.47 L621.38,416.48 L621.53,416.48 L621.68,416.48 L621.83,416.49 L621.98,416.49 L622.13,416.49 L622.28,416.50 L622.43,416.50 L622.58,416.50 L622.73,416.51 L622.88,416.51 L623.03,416.51 L623.18,416.52 L623.33,416.52 L623.48,416.52 L623.63,416.53 L623.78,416.53 L623.93,416.53 L624.07,416.54 L624.22,416.54 L624.37,416.54 L624.52,416.55 L624.67,416.55 L624.82,416.55 L624.97,416.56 L625.12,416.56 L625.27,416.56 L625.42,416.57 L625.57,416.57 L625.72,416.57 L625.87,416.58 L626.02,416.58 L626.17,416.58 L626.32,416.59 L626.47,416.59 L626.62,416.59 L626.77,416.60 L626.92,416.60 L627.07,416.60 L627.22,416.60 L627.37,416.61 L627.52,416.61 L627.67,416.61 L627.82,416.62 L627.97,416.62 L628.12,416.62 L628.27,416.63 L628.42,416.63 L628.57,416.63 L628.72,416.64 L628.87,416.64 L629.02,416.64 L629.17,416.65 L629.32,416.65 L629.47,416.65 L629.62,416.66 L629.77,416.66 L629.92,416.66 L630.07,416.67 L630.22,416.67 L630.37,416.67 L630.52,416.68 L630.67,416.68 L630.82,416.68 L630.97,416.69 L631.12,416.69 L631.27,416.69 L631.42,416.69 L631.57,416.70 L631.72,416.70 L631.87,416.70 L632.02,416.71 L632.17,416.71 L632.32,416.71 L632.47,416.72 L632.62,416.72 L632.77,416.72 L632.92,416.73 L633.07,416.73 L633.22,416.73 L633.37,416.73 L633.52,416.74 L633.67,416.74 L633.82,416.74 L633.97,416.75 L634.12,416.75 L634.27,416.75 L634.42,416.76 L634.57,416.76 L634.72,416.76 L634.87,416.76 L635.02,416.77 L635.17,416.77 L635.32,416.77 L635.47,416.78 L635.62,416.78 L635.77,416.78 L635.92,416.78 L636.06,416.79 L636.21,416.79 L636.36,416.79 L636.51,416.80 L636.66,416.80 L636.81,416.80 L636.96,416.80 L637.11,416.81 L637.26,416.81 L637.41,416.81 L637.56,416.82 L637.71,416.82 L637.86,416.82 L638.01,416.82 L638.16,416.83 L638.31,416.83 L638.46,416.83 L638.61,416.83 L638.76,416.84 L638.91,416.84 L639.06,416.84 L639.21,416.84 L639.36,416.85 L639.51,416.85 L639.66,416.85 L639.81,416.85 L639.96,416.86 L640.11,416.86 L640.26,416.86 L640.41,416.86 L640.56,416.87 L640.71,416.87 L640.86,416.87 L641.01,416.87 L641.16,416.88 L641.31,416.88 L641.46,416.88 L641.61,416.88 L641.76,416.89 L641.91,416.89 L642.06,416.89 L642.21,416.89 L642.36,416.89 L642.51,416.90 L642.66,416.90 L642.81,416.90 L642.96,416.90 L643.11,416.91 L643.26,416.91 L643.41,416.91 L643.56,416.91 L643.71,416.91 L643.86,416.92 L644.01,416.92 L644.16,416.92 L644.31,416.92 L644.46,416.92 L644.61,416.93 L644.76,416.93 L644.91,416.93 L645.06,416.93 L645.21,416.93 L645.36,416.93 L645.51,416.94 L645.66,416.94 L645.81,416.94 L645.96,416.94 L646.11,416.94 L646.26,416.94 L646.41,416.95 L646.56,416.95 L646.71,416.95 L646.86,416.95 L647.01,416.95 L647.16,416.95 L647.31,416.96 L647.46,416.96 L647.61,416.96 L647.76,416.96 L647.91,416.96 L648.05,416.96 L648.20,416.96 L648.35,416.96 L648.50,416.97 L648.65,416.97 L648.80,416.97 L648.95,416.97 L649.10,416.97 L649.25,416.97 L649.40,416.97 L649.55,416.97 L649.70,416.97 L649.85,416.98 L650.00,416.98 L650.15,416.98 L650.30,416.98 L650.45,416.98 L650.60,416.98 L650.75,416.98 L650.90,416.98 L651.05,416.98 L651.20,416.98 L651.35,416.98 L651.50,416.98 L651.65,416.98 L651.80,416.99 L651.95,416.99 L652.10,416.99 L652.25,416.99 L652.40,416.99 L652.55,416.99 L652.70,416.99 L652.85,416.99 L653.00,416.99 L653.15,416.99 L653.30,416.99 L653.45,416.99 L653.60,416.99 L653.75,416.99 L653.90,416.99 L654.05,416.99" fill="none" stroke="#7c7c98" stroke-width="0.75" stroke-linejoin="round"/>
<path d="M141.63,419.13 L141.78,418.64 L141.93,417.89 L142.08,416.77 L142.23,415.14 L142.38,412.85 L142.53,409.68 L142.68,405.42 L142.83,399.83 L142.98,392.71 L143.13,383.87 L143.28,373.20 L143.43,360.71 L143.58,346.52 L143.73,330.92 L143.88,314.37 L144.03,297.49 L144.18,281.02 L144.33,265.78 L144.48,252.62 L144.62,242.31 L144.77,235.50 L144.92,232.62 L145.07,233.85 L145.22,236.96 L145.37,241.66 L145.52,247.83 L145.67,255.31 L145.82,263.92 L145.97,273.43 L146.12,283.64 L146.27,294.28 L146.42,305.15 L146.57,316.00 L146.72,326.66 L146.87,336.94 L147.02,346.70 L147.17,355.84 L147.32,364.25 L147.47,371.91 L147.62,378.79 L147.77,384.89 L147.92,390.23 L148.07,394.86 L148.22,398.82 L148.37,402.19 L148.52,405.01 L148.67,407.36 L148.82,409.30 L148.97,410.89 L149.12,412.19 L149.27,413.25 L149.42,414.10 L149.57,414.79 L149.72,415.35 L149.87,415.81 L150.02,416.19 L150.17,416.50 L150.32,416.76 L150.47,416.99 L150.62,417.18 L150.77,417.35 L150.92,417.51 L151.07,417.64 L151.22,417.77 L151.37,417.88 L151.52,417.99 L151.67,418.09Z" fill="#e8a21c" stroke="#e8a21c" stroke-width="0.6"/>
<path d="M141.63,419.13 L141.78,418.64 L141.93,417.89 L142.08,416.77 L142.23,415.14 L142.38,412.85 L142.53,409.68 L142.68,405.42 L142.83,399.83 L142.98,392.71 L143.13,383.87 L143.28,373.20 L143.43,360.71 L143.58,346.52 L143.73,330.92 L143.88,314.37 L144.03,297.49 L144.18,281.02 L144.33,265.78 L144.48,252.62 L144.62,242.31 L144.77,235.50 L144.92,232.62 L145.07,233.85 L145.22,236.96 L145.37,241.66 L145.52,247.83 L145.67,255.31 L145.82,263.92 L145.97,273.43 L146.12,283.64 L146.27,294.28 L146.42,305.15 L146.57,316.00 L146.72,326.66 L146.87,336.94 L147.02,346.70 L147.17,355.84 L147.32,364.25 L147.47,371.91 L147.62,378.79 L147.77,384.89 L147.92,390.23 L148.07,394.86 L148.22,398.82 L148.37,402.19 L148.52,405.01 L148.67,407.36 L148.82,409.30 L148.97,410.89 L149.12,412.19 L149.27,413.25 L149.42,414.10 L149.57,414.79 L149.72,415.35 L149.87,415.81 L150.02,416.19 L150.17,416.50 L150.32,416.76 L150.47,416.99 L150.62,417.18 L150.77,417.35 L150.92,417.51 L151.07,417.64 L151.22,417.77 L151.37,417.88 L151.52,417.99 L151.67,418.09" fill="none" stroke="#c78a1e" stroke-width="0.8" stroke-linejoin="round"/>
<path d="M289.10,418.47 L289.25,418.39 L289.40,418.24 L289.55,417.97 L289.70,417.50 L289.85,416.69 L290.00,415.38 L290.15,413.30 L290.30,410.15 L290.45,405.54 L290.60,399.02 L290.75,390.18 L290.90,378.63 L291.05,364.15 L291.20,346.74 L291.35,326.75 L291.50,304.87 L291.65,282.20 L291.80,260.15 L291.95,240.31 L292.10,224.28 L292.25,213.46 L292.40,208.83 L292.55,210.13 L292.70,214.13 L292.85,220.46 L293.00,228.93 L293.15,239.24 L293.30,251.06 L293.45,264.00 L293.60,277.67 L293.75,291.68 L293.90,305.66 L294.05,319.30 L294.20,332.30 L294.35,344.46 L294.50,355.62 L294.65,365.67 L294.80,374.57 L294.95,382.33 L295.10,388.98 L295.25,394.60 L295.40,399.28 L295.55,403.12 L295.70,406.24 L295.85,408.73 L296.00,410.70 L296.15,412.24 L296.30,413.44 L296.45,414.37 L296.60,415.08 L296.75,415.62 L296.90,416.04 L297.05,416.37 L297.20,416.62 L297.35,416.83 L297.50,416.99 L297.65,417.13 L297.80,417.24 L297.95,417.34 L298.10,417.43 L298.25,417.51 L298.40,417.58 L298.55,417.65 L298.70,417.71 L298.85,417.76 L299.00,417.82 L299.15,417.87Z" fill="#0e8282" stroke="#0e8282" stroke-width="0.6"/>
<path d="M289.10,418.47 L289.25,418.39 L289.40,418.24 L289.55,417.97 L289.70,417.50 L289.85,416.69 L290.00,415.38 L290.15,413.30 L290.30,410.15 L290.45,405.54 L290.60,399.02 L290.75,390.18 L290.90,378.63 L291.05,364.15 L291.20,346.74 L291.35,326.75 L291.50,304.87 L291.65,282.20 L291.80,260.15 L291.95,240.31 L292.10,224.28 L292.25,213.46 L292.40,208.83 L292.55,210.13 L292.70,214.13 L292.85,220.46 L293.00,228.93 L293.15,239.24 L293.30,251.06 L293.45,264.00 L293.60,277.67 L293.75,291.68 L293.90,305.66 L294.05,319.30 L294.20,332.30 L294.35,344.46 L294.50,355.62 L294.65,365.67 L294.80,374.57 L294.95,382.33 L295.10,388.98 L295.25,394.60 L295.40,399.28 L295.55,403.12 L295.70,406.24 L295.85,408.73 L296.00,410.70 L296.15,412.24 L296.30,413.44 L296.45,414.37 L296.60,415.08 L296.75,415.62 L296.90,416.04 L297.05,416.37 L297.20,416.62 L297.35,416.83 L297.50,416.99 L297.65,417.13 L297.80,417.24 L297.95,417.34 L298.10,417.43 L298.25,417.51 L298.40,417.58 L298.55,417.65 L298.70,417.71 L298.85,417.76 L299.00,417.82 L299.15,417.87" fill="none" stroke="#0b6060" stroke-width="0.8" stroke-linejoin="round"/>
<path d="M446.47,416.03 L446.62,415.97 L446.77,415.86 L446.92,415.68 L447.07,415.39 L447.22,414.92 L447.37,414.19 L447.52,413.10 L447.67,411.49 L447.82,409.20 L447.97,406.02 L448.12,401.74 L448.27,396.13 L448.42,389.00 L448.57,380.22 L448.72,369.73 L448.87,357.62 L449.02,344.14 L449.17,329.68 L449.32,314.81 L449.47,300.26 L449.62,286.80 L449.77,275.27 L449.92,266.41 L450.07,260.82 L450.22,258.91 L450.37,260.29 L450.52,262.71 L450.67,266.15 L450.82,270.54 L450.97,275.80 L451.12,281.83 L451.27,288.51 L451.42,295.72 L451.57,303.32 L451.72,311.17 L451.87,319.15 L452.02,327.14 L452.17,335.01 L452.32,342.67 L452.47,350.02 L452.62,357.00 L452.77,363.54 L452.92,369.62 L453.07,375.20 L453.22,380.28 L453.37,384.85 L453.52,388.93 L453.67,392.54 L453.82,395.70 L453.97,398.45 L454.12,400.83 L454.27,402.86 L454.42,404.60 L454.57,406.07 L454.72,407.31 L454.87,408.35 L455.02,409.22 L455.17,409.95 L455.32,410.56 L455.47,411.07 L455.62,411.50 L455.77,411.87 L455.92,412.18 L456.07,412.44 L456.22,412.67 L456.36,412.88 L456.51,413.06 L456.66,413.22 L456.81,413.36 L456.96,413.50 L457.11,413.62 L457.26,413.73 L457.41,413.84 L457.56,413.94 L457.71,414.03 L457.86,414.12 L458.01,414.21 L458.16,414.29 L458.31,414.37 L458.46,414.44 L458.61,414.51Z" fill="#0e8282" stroke="#0e8282" stroke-width="0.6"/>
<path d="M446.47,416.03 L446.62,415.97 L446.77,415.86 L446.92,415.68 L447.07,415.39 L447.22,414.92 L447.37,414.19 L447.52,413.10 L447.67,411.49 L447.82,409.20 L447.97,406.02 L448.12,401.74 L448.27,396.13 L448.42,389.00 L448.57,380.22 L448.72,369.73 L448.87,357.62 L449.02,344.14 L449.17,329.68 L449.32,314.81 L449.47,300.26 L449.62,286.80 L449.77,275.27 L449.92,266.41 L450.07,260.82 L450.22,258.91 L450.37,260.29 L450.52,262.71 L450.67,266.15 L450.82,270.54 L450.97,275.80 L451.12,281.83 L451.27,288.51 L451.42,295.72 L451.57,303.32 L451.72,311.17 L451.87,319.15 L452.02,327.14 L452.17,335.01 L452.32,342.67 L452.47,350.02 L452.62,357.00 L452.77,363.54 L452.92,369.62 L453.07,375.20 L453.22,380.28 L453.37,384.85 L453.52,388.93 L453.67,392.54 L453.82,395.70 L453.97,398.45 L454.12,400.83 L454.27,402.86 L454.42,404.60 L454.57,406.07 L454.72,407.31 L454.87,408.35 L455.02,409.22 L455.17,409.95 L455.32,410.56 L455.47,411.07 L455.62,411.50 L455.77,411.87 L455.92,412.18 L456.07,412.44 L456.22,412.67 L456.36,412.88 L456.51,413.06 L456.66,413.22 L456.81,413.36 L456.96,413.50 L457.11,413.62 L457.26,413.73 L457.41,413.84 L457.56,413.94 L457.71,414.03 L457.86,414.12 L458.01,414.21 L458.16,414.29 L458.31,414.37 L458.46,414.44 L458.61,414.51" fill="none" stroke="#0b6060" stroke-width="0.8" stroke-linejoin="round"/>
<path d="M566.52,415.73 L566.67,415.67 L566.82,415.60 L566.97,415.50 L567.12,415.38 L567.27,415.24 L567.42,415.06 L567.57,414.83 L567.72,414.56 L567.87,414.24 L568.02,413.85 L568.17,413.39 L568.32,412.84 L568.47,412.20 L568.62,411.45 L568.77,410.59 L568.92,409.60 L569.07,408.48 L569.22,407.20 L569.37,405.78 L569.52,404.19 L569.67,402.44 L569.82,400.53 L569.97,398.45 L570.12,396.21 L570.27,393.82 L570.42,391.30 L570.57,388.65 L570.72,385.90 L570.87,383.08 L571.02,380.21 L571.17,377.32 L571.32,374.46 L571.47,371.66 L571.62,368.96 L571.77,366.39 L571.92,364.01 L572.07,361.84 L572.22,359.92 L572.37,358.29 L572.52,356.98 L572.67,356.00 L572.82,355.37 L572.97,355.12 L573.12,355.34 L573.27,355.66 L573.42,356.00 L573.57,356.38 L573.72,356.80 L573.87,357.24 L574.02,357.71 L574.17,358.22 L574.32,358.75 L574.47,359.32 L574.62,359.91 L574.77,360.53 L574.92,361.18 L575.07,361.85 L575.22,362.55 L575.37,363.27 L575.52,364.02 L575.67,364.78 L575.82,365.57 L575.97,366.38 L576.11,367.21 L576.26,368.05 L576.41,368.91 L576.56,369.78 L576.71,370.66 L576.86,371.56 L577.01,372.46 L577.16,373.38 L577.31,374.30 L577.46,375.23 L577.61,376.16 L577.76,377.10 L577.91,378.03 L578.06,378.97 L578.21,379.91 L578.36,380.84 L578.51,381.77 L578.66,382.70 L578.81,383.62 L578.96,384.53 L579.11,385.44 L579.26,386.34 L579.41,387.23 L579.56,388.10 L579.71,388.97 L579.86,389.82 L580.01,390.66 L580.16,391.49 L580.31,392.30 L580.46,393.10 L580.61,393.88 L580.76,394.64 L580.91,395.39 L581.06,396.12 L581.21,396.84 L581.36,397.53 L581.51,398.21 L581.66,398.88 L581.81,399.52 L581.96,400.15 L582.11,400.75 L582.26,401.34 L582.41,401.91 L582.56,402.47 L582.71,403.00 L582.86,403.52 L583.01,404.02 L583.16,404.50 L583.31,404.97 L583.46,405.42 L583.61,405.85 L583.76,406.27 L583.91,406.67 L584.06,407.05 L584.21,407.42 L584.36,407.78 L584.51,408.12 L584.66,408.44 L584.81,408.76 L584.96,409.05 L585.11,409.34 L585.26,409.61 L585.41,409.88 L585.56,410.13 L585.71,410.37 L585.86,410.59 L586.01,410.81 L586.16,411.02 L586.31,411.22 L586.46,411.41 L586.61,411.59 L586.76,411.76 L586.91,411.92 L587.06,412.08 L587.21,412.23 L587.36,412.37 L587.51,412.50 L587.66,412.63 L587.81,412.75 L587.96,412.87 L588.11,412.98 L588.25,413.09 L588.40,413.19 L588.55,413.28 L588.70,413.38 L588.85,413.46 L589.00,413.55 L589.15,413.63 L589.30,413.70 L589.45,413.78 L589.60,413.85 L589.75,413.91 L589.90,413.98 L590.05,414.04 L590.20,414.10 L590.35,414.15 L590.50,414.21 L590.65,414.26 L590.80,414.31 L590.95,414.36 L591.10,414.40 L591.25,414.45 L591.40,414.49 L591.55,414.53 L591.70,414.57Z" fill="#0e8282" stroke="#0e8282" stroke-width="0.6"/>
<path d="M566.52,415.73 L566.67,415.67 L566.82,415.60 L566.97,415.50 L567.12,415.38 L567.27,415.24 L567.42,415.06 L567.57,414.83 L567.72,414.56 L567.87,414.24 L568.02,413.85 L568.17,413.39 L568.32,412.84 L568.47,412.20 L568.62,411.45 L568.77,410.59 L568.92,409.60 L569.07,408.48 L569.22,407.20 L569.37,405.78 L569.52,404.19 L569.67,402.44 L569.82,400.53 L569.97,398.45 L570.12,396.21 L570.27,393.82 L570.42,391.30 L570.57,388.65 L570.72,385.90 L570.87,383.08 L571.02,380.21 L571.17,377.32 L571.32,374.46 L571.47,371.66 L571.62,368.96 L571.77,366.39 L571.92,364.01 L572.07,361.84 L572.22,359.92 L572.37,358.29 L572.52,356.98 L572.67,356.00 L572.82,355.37 L572.97,355.12 L573.12,355.34 L573.27,355.66 L573.42,356.00 L573.57,356.38 L573.72,356.80 L573.87,357.24 L574.02,357.71 L574.17,358.22 L574.32,358.75 L574.47,359.32 L574.62,359.91 L574.77,360.53 L574.92,361.18 L575.07,361.85 L575.22,362.55 L575.37,363.27 L575.52,364.02 L575.67,364.78 L575.82,365.57 L575.97,366.38 L576.11,367.21 L576.26,368.05 L576.41,368.91 L576.56,369.78 L576.71,370.66 L576.86,371.56 L577.01,372.46 L577.16,373.38 L577.31,374.30 L577.46,375.23 L577.61,376.16 L577.76,377.10 L577.91,378.03 L578.06,378.97 L578.21,379.91 L578.36,380.84 L578.51,381.77 L578.66,382.70 L578.81,383.62 L578.96,384.53 L579.11,385.44 L579.26,386.34 L579.41,387.23 L579.56,388.10 L579.71,388.97 L579.86,389.82 L580.01,390.66 L580.16,391.49 L580.31,392.30 L580.46,393.10 L580.61,393.88 L580.76,394.64 L580.91,395.39 L581.06,396.12 L581.21,396.84 L581.36,397.53 L581.51,398.21 L581.66,398.88 L581.81,399.52 L581.96,400.15 L582.11,400.75 L582.26,401.34 L582.41,401.91 L582.56,402.47 L582.71,403.00 L582.86,403.52 L583.01,404.02 L583.16,404.50 L583.31,404.97 L583.46,405.42 L583.61,405.85 L583.76,406.27 L583.91,406.67 L584.06,407.05 L584.21,407.42 L584.36,407.78 L584.51,408.12 L584.66,408.44 L584.81,408.76 L584.96,409.05 L585.11,409.34 L585.26,409.61 L585.41,409.88 L585.56,410.13 L585.71,410.37 L585.86,410.59 L586.01,410.81 L586.16,411.02 L586.31,411.22 L586.46,411.41 L586.61,411.59 L586.76,411.76 L586.91,411.92 L587.06,412.08 L587.21,412.23 L587.36,412.37 L587.51,412.50 L587.66,412.63 L587.81,412.75 L587.96,412.87 L588.11,412.98 L588.25,413.09 L588.40,413.19 L588.55,413.28 L588.70,413.38 L588.85,413.46 L589.00,413.55 L589.15,413.63 L589.30,413.70 L589.45,413.78 L589.60,413.85 L589.75,413.91 L589.90,413.98 L590.05,414.04 L590.20,414.10 L590.35,414.15 L590.50,414.21 L590.65,414.26 L590.80,414.31 L590.95,414.36 L591.10,414.40 L591.25,414.45 L591.40,414.49 L591.55,414.53 L591.70,414.57" fill="none" stroke="#0b6a6a" stroke-width="0.8" stroke-linejoin="round"/>
<line x1="52.199999999999996" y1="423.80" x2="54.8" y2="423.80" stroke="#222" stroke-width="1"/>
<text x="50.80" y="427.00" font-size="9" text-anchor="end" fill="#0a0a0a" stroke="#111" stroke-width="0.22">-25</text>
<line x1="52.199999999999996" y1="411.00" x2="54.8" y2="411.00" stroke="#222" stroke-width="1"/>
<text x="50.80" y="414.20" font-size="9" text-anchor="end" fill="#0a0a0a" stroke="#111" stroke-width="0.22">0</text>
<line x1="52.199999999999996" y1="398.20" x2="54.8" y2="398.20" stroke="#222" stroke-width="1"/>
<text x="50.80" y="401.40" font-size="9" text-anchor="end" fill="#0a0a0a" stroke="#111" stroke-width="0.22">25</text>
<line x1="52.199999999999996" y1="385.40" x2="54.8" y2="385.40" stroke="#222" stroke-width="1"/>
<text x="50.80" y="388.60" font-size="9" text-anchor="end" fill="#0a0a0a" stroke="#111" stroke-width="0.22">50</text>
<line x1="52.199999999999996" y1="372.60" x2="54.8" y2="372.60" stroke="#222" stroke-width="1"/>
<text x="50.80" y="375.80" font-size="9" text-anchor="end" fill="#0a0a0a" stroke="#111" stroke-width="0.22">75</text>
<line x1="52.199999999999996" y1="359.80" x2="54.8" y2="359.80" stroke="#222" stroke-width="1"/>
<text x="50.80" y="363.00" font-size="9" text-anchor="end" fill="#0a0a0a" stroke="#111" stroke-width="0.22">100</text>
<line x1="52.199999999999996" y1="347.00" x2="54.8" y2="347.00" stroke="#222" stroke-width="1"/>
<text x="50.80" y="350.20" font-size="9" text-anchor="end" fill="#0a0a0a" stroke="#111" stroke-width="0.22">125</text>
<line x1="52.199999999999996" y1="334.20" x2="54.8" y2="334.20" stroke="#222" stroke-width="1"/>
<text x="50.80" y="337.40" font-size="9" text-anchor="end" fill="#0a0a0a" stroke="#111" stroke-width="0.22">150</text>
<line x1="52.199999999999996" y1="321.40" x2="54.8" y2="321.40" stroke="#222" stroke-width="1"/>
<text x="50.80" y="324.60" font-size="9" text-anchor="end" fill="#0a0a0a" stroke="#111" stroke-width="0.22">175</text>
<line x1="52.199999999999996" y1="308.60" x2="54.8" y2="308.60" stroke="#222" stroke-width="1"/>
<text x="50.80" y="311.80" font-size="9" text-anchor="end" fill="#0a0a0a" stroke="#111" stroke-width="0.22">200</text>
<line x1="52.199999999999996" y1="295.80" x2="54.8" y2="295.80" stroke="#222" stroke-width="1"/>
<text x="50.80" y="299.00" font-size="9" text-anchor="end" fill="#0a0a0a" stroke="#111" stroke-width="0.22">225</text>
<line x1="52.199999999999996" y1="283.00" x2="54.8" y2="283.00" stroke="#222" stroke-width="1"/>
<text x="50.80" y="286.20" font-size="9" text-anchor="end" fill="#0a0a0a" stroke="#111" stroke-width="0.22">250</text>
<line x1="52.199999999999996" y1="270.20" x2="54.8" y2="270.20" stroke="#222" stroke-width="1"/>
<text x="50.80" y="273.40" font-size="9" text-anchor="end" fill="#0a0a0a" stroke="#111" stroke-width="0.22">275</text>
<line x1="52.199999999999996" y1="257.40" x2="54.8" y2="257.40" stroke="#222" stroke-width="1"/>
<text x="50.80" y="260.60" font-size="9" text-anchor="end" fill="#0a0a0a" stroke="#111" stroke-width="0.22">300</text>
<line x1="52.199999999999996" y1="244.60" x2="54.8" y2="244.60" stroke="#222" stroke-width="1"/>
<text x="50.80" y="247.80" font-size="9" text-anchor="end" fill="#0a0a0a" stroke="#111" stroke-width="0.22">325</text>
<line x1="52.199999999999996" y1="231.80" x2="54.8" y2="231.80" stroke="#222" stroke-width="1"/>
<text x="50.80" y="235.00" font-size="9" text-anchor="end" fill="#0a0a0a" stroke="#111" stroke-width="0.22">350</text>
<line x1="52.199999999999996" y1="219.00" x2="54.8" y2="219.00" stroke="#222" stroke-width="1"/>
<text x="50.80" y="222.20" font-size="9" text-anchor="end" fill="#0a0a0a" stroke="#111" stroke-width="0.22">375</text>
<line x1="52.199999999999996" y1="206.20" x2="54.8" y2="206.20" stroke="#222" stroke-width="1"/>
<text x="50.80" y="209.40" font-size="9" text-anchor="end" fill="#0a0a0a" stroke="#111" stroke-width="0.22">400</text>
<line x1="52.199999999999996" y1="193.40" x2="54.8" y2="193.40" stroke="#222" stroke-width="1"/>
<text x="50.80" y="196.60" font-size="9" text-anchor="end" fill="#0a0a0a" stroke="#111" stroke-width="0.22">425</text>
<line x1="78.53" y1="424.4" x2="78.53" y2="427.9" stroke="#222" stroke-width="1"/>
<text x="78.53" y="437.60" font-size="9" text-anchor="middle" fill="#0a0a0a" stroke="#111" stroke-width="0.22">0.1</text>
<line x1="102.51" y1="424.4" x2="102.51" y2="427.9" stroke="#222" stroke-width="1"/>
<text x="102.51" y="437.60" font-size="9" text-anchor="middle" fill="#0a0a0a" stroke="#111" stroke-width="0.22">0.2</text>
<line x1="126.49" y1="424.4" x2="126.49" y2="427.9" stroke="#222" stroke-width="1"/>
<text x="126.49" y="437.60" font-size="9" text-anchor="middle" fill="#0a0a0a" stroke="#111" stroke-width="0.22">0.3</text>
<line x1="150.47" y1="424.4" x2="150.47" y2="427.9" stroke="#222" stroke-width="1"/>
<text x="150.47" y="437.60" font-size="9" text-anchor="middle" fill="#0a0a0a" stroke="#111" stroke-width="0.22">0.4</text>
<line x1="174.45" y1="424.4" x2="174.45" y2="427.9" stroke="#222" stroke-width="1"/>
<text x="174.45" y="437.60" font-size="9" text-anchor="middle" fill="#0a0a0a" stroke="#111" stroke-width="0.22">0.5</text>
<line x1="198.43" y1="424.4" x2="198.43" y2="427.9" stroke="#222" stroke-width="1"/>
<text x="198.43" y="437.60" font-size="9" text-anchor="middle" fill="#0a0a0a" stroke="#111" stroke-width="0.22">0.6</text>
<line x1="222.41" y1="424.4" x2="222.41" y2="427.9" stroke="#222" stroke-width="1"/>
<text x="222.41" y="437.60" font-size="9" text-anchor="middle" fill="#0a0a0a" stroke="#111" stroke-width="0.22">0.7</text>
<line x1="246.39" y1="424.4" x2="246.39" y2="427.9" stroke="#222" stroke-width="1"/>
<text x="246.39" y="437.60" font-size="9" text-anchor="middle" fill="#0a0a0a" stroke="#111" stroke-width="0.22">0.8</text>
<line x1="270.37" y1="424.4" x2="270.37" y2="427.9" stroke="#222" stroke-width="1"/>
<text x="270.37" y="437.60" font-size="9" text-anchor="middle" fill="#0a0a0a" stroke="#111" stroke-width="0.22">0.9</text>
<line x1="294.35" y1="424.4" x2="294.35" y2="427.9" stroke="#222" stroke-width="1"/>
<text x="294.35" y="437.60" font-size="9" text-anchor="middle" fill="#0a0a0a" stroke="#111" stroke-width="0.22">1.0</text>
<line x1="318.33" y1="424.4" x2="318.33" y2="427.9" stroke="#222" stroke-width="1"/>
<text x="318.33" y="437.60" font-size="9" text-anchor="middle" fill="#0a0a0a" stroke="#111" stroke-width="0.22">1.1</text>
<line x1="342.31" y1="424.4" x2="342.31" y2="427.9" stroke="#222" stroke-width="1"/>
<text x="342.31" y="437.60" font-size="9" text-anchor="middle" fill="#0a0a0a" stroke="#111" stroke-width="0.22">1.2</text>
<line x1="366.29" y1="424.4" x2="366.29" y2="427.9" stroke="#222" stroke-width="1"/>
<text x="366.29" y="437.60" font-size="9" text-anchor="middle" fill="#0a0a0a" stroke="#111" stroke-width="0.22">1.3</text>
<line x1="390.27" y1="424.4" x2="390.27" y2="427.9" stroke="#222" stroke-width="1"/>
<text x="390.27" y="437.60" font-size="9" text-anchor="middle" fill="#0a0a0a" stroke="#111" stroke-width="0.22">1.4</text>
<line x1="414.25" y1="424.4" x2="414.25" y2="427.9" stroke="#222" stroke-width="1"/>
<text x="414.25" y="437.60" font-size="9" text-anchor="middle" fill="#0a0a0a" stroke="#111" stroke-width="0.22">1.5</text>
<line x1="438.23" y1="424.4" x2="438.23" y2="427.9" stroke="#222" stroke-width="1"/>
<text x="438.23" y="437.60" font-size="9" text-anchor="middle" fill="#0a0a0a" stroke="#111" stroke-width="0.22">1.6</text>
<line x1="462.21" y1="424.4" x2="462.21" y2="427.9" stroke="#222" stroke-width="1"/>
<text x="462.21" y="437.60" font-size="9" text-anchor="middle" fill="#0a0a0a" stroke="#111" stroke-width="0.22">1.7</text>
<line x1="486.19" y1="424.4" x2="486.19" y2="427.9" stroke="#222" stroke-width="1"/>
<text x="486.19" y="437.60" font-size="9" text-anchor="middle" fill="#0a0a0a" stroke="#111" stroke-width="0.22">1.8</text>
<line x1="510.17" y1="424.4" x2="510.17" y2="427.9" stroke="#222" stroke-width="1"/>
<text x="510.17" y="437.60" font-size="9" text-anchor="middle" fill="#0a0a0a" stroke="#111" stroke-width="0.22">1.9</text>
<line x1="534.15" y1="424.4" x2="534.15" y2="427.9" stroke="#222" stroke-width="1"/>
<text x="534.15" y="437.60" font-size="9" text-anchor="middle" fill="#0a0a0a" stroke="#111" stroke-width="0.22">2.0</text>
<line x1="558.13" y1="424.4" x2="558.13" y2="427.9" stroke="#222" stroke-width="1"/>
<text x="558.13" y="437.60" font-size="9" text-anchor="middle" fill="#0a0a0a" stroke="#111" stroke-width="0.22">2.1</text>
<line x1="582.11" y1="424.4" x2="582.11" y2="427.9" stroke="#222" stroke-width="1"/>
<text x="582.11" y="437.60" font-size="9" text-anchor="middle" fill="#0a0a0a" stroke="#111" stroke-width="0.22">2.2</text>
<line x1="606.09" y1="424.4" x2="606.09" y2="427.9" stroke="#222" stroke-width="1"/>
<text x="606.09" y="437.60" font-size="9" text-anchor="middle" fill="#0a0a0a" stroke="#111" stroke-width="0.22">2.3</text>
<line x1="630.07" y1="424.4" x2="630.07" y2="427.9" stroke="#222" stroke-width="1"/>
<text x="630.07" y="437.60" font-size="9" text-anchor="middle" fill="#0a0a0a" stroke="#111" stroke-width="0.22">2.4</text>
<line x1="654.05" y1="424.4" x2="654.05" y2="427.9" stroke="#222" stroke-width="1"/>
<text x="654.05" y="437.60" font-size="9" text-anchor="middle" fill="#0a0a0a" stroke="#111" stroke-width="0.22">2.5</text>
<text x="361.00" y="449.00" font-size="9" text-anchor="middle" fill="#0a0a0a" stroke="#111" stroke-width="0.2">Time [min]</text>
<text transform="translate(28.5,306) rotate(-90)" font-size="9" text-anchor="middle" fill="#0a0a0a">Response</text>
<text x="58.60" y="181.60" font-size="9.15" text-anchor="start" fill="#0a0a0a" stroke="#111" stroke-width="0.2">DAD1A,Sig=254.0,4.0&#160;&#160;Ref=360.0,80.0</text>
<text transform="translate(88.8,405.5) rotate(-45)" font-size="8.5" fill="#0a0a0a" stroke="#0a0a0a" stroke-width="0.25" x="2" y="2.5">181.20</text>
<text transform="translate(144.5,230.1) rotate(-45)" font-size="8.5" fill="#0a0a0a" stroke="#0a0a0a" stroke-width="0.25" x="2" y="2.5">cmp 1</text>
<text transform="translate(266.0,323.0) rotate(-45)" font-size="8.5" fill="#0a0a0a" stroke="#0a0a0a" stroke-width="0.25" x="2" y="2.5">cmp 2</text>
<text transform="translate(301.6,215.0) rotate(-45)" font-size="8.5" fill="#0a0a0a" stroke="#0a0a0a" stroke-width="0.25" x="2" y="2.5">cmp 3</text>
<text transform="translate(301.6,215.0) rotate(-45)" font-size="8.5" fill="#0a0a0a" stroke="#0a0a0a" stroke-width="0.25" x="2" y="12.5">361.20</text>
<text transform="translate(317.2,235.2) rotate(-45)" font-size="8.5" fill="#0a0a0a" stroke="#0a0a0a" stroke-width="0.25" x="2" y="2.5">cmp 4</text>
<text transform="translate(317.2,235.2) rotate(-45)" font-size="8.5" fill="#0a0a0a" stroke="#0a0a0a" stroke-width="0.25" x="2" y="12.5">391.70</text>
<text transform="translate(450.6,258.0) rotate(-45)" font-size="8.5" fill="#0a0a0a" stroke="#0a0a0a" stroke-width="0.25" x="2" y="2.5">cmp 5</text>
<text transform="translate(483.8,409.0) rotate(-45)" font-size="8.5" fill="#0a0a0a" stroke="#0a0a0a" stroke-width="0.25" x="2" y="2.5">cmp 6</text>
<text transform="translate(573.2,355.0) rotate(-45)" font-size="8.5" fill="#0a0a0a" stroke="#0a0a0a" stroke-width="0.25" x="2" y="2.5">cmp 7</text>
<rect x="56.4" y="481.4" width="168.6" height="245.0" fill="#fff" stroke="#222" stroke-width="2"/>
<text x="60.4" y="475.4" font-size="9.15" fill="#1c2f5c">Retention time: 0.378 min, Purity: N/A</text>
<path d="M56.40,723.52 L56.90,723.52 L57.40,723.52 L57.90,723.52 L58.40,723.52 L58.90,723.52 L59.40,723.52 L59.90,723.52 L60.40,723.52 L60.90,723.52 L61.40,723.52 L61.90,723.52 L62.40,723.52 L62.90,723.52 L63.40,723.52 L63.90,723.52 L64.40,723.52 L64.90,723.52 L65.40,723.52 L65.90,723.52 L66.40,723.52 L66.90,723.52 L67.40,723.52 L67.90,723.52 L68.40,723.52 L68.90,723.52 L69.40,723.52 L69.90,723.52 L70.40,723.51 L70.90,723.51 L71.40,723.50 L71.90,723.50 L72.40,723.48 L72.90,723.46 L73.40,723.43 L73.90,723.39 L74.40,723.34 L74.90,723.26 L75.40,723.15 L75.90,723.01 L76.40,722.82 L76.90,722.57 L77.40,722.25 L77.90,721.84 L78.40,721.32 L78.90,720.68 L79.40,719.89 L79.90,718.92 L80.40,717.76 L80.90,716.39 L81.40,714.77 L81.90,712.89 L82.40,710.74 L82.90,708.30 L83.40,705.54 L83.90,702.48 L84.40,699.11 L84.90,695.42 L85.40,691.42 L85.90,687.14 L86.40,682.57 L86.90,677.74 L87.40,672.67 L87.90,667.38 L88.40,661.90 L88.90,656.25 L89.40,650.46 L89.90,644.55 L90.40,638.54 L90.90,632.47 L91.40,626.35 L91.90,620.21 L92.40,614.08 L92.90,607.97 L93.40,601.93 L93.90,595.97 L94.40,590.12 L94.90,584.43 L95.40,578.93 L95.90,573.65 L96.40,568.63 L96.90,563.92 L97.40,559.56 L97.90,555.58 L98.40,552.03 L98.90,548.93 L99.40,546.33 L99.90,544.23 L100.40,542.67 L100.90,541.64 L101.40,541.16 L101.90,541.21 L102.40,541.79 L102.90,542.87 L103.40,544.42 L103.90,546.42 L104.40,548.83 L104.90,551.60 L105.40,554.70 L105.90,558.09 L106.40,561.73 L106.90,565.58 L107.40,569.61 L107.90,573.78 L108.40,578.07 L108.90,582.46 L109.40,586.92 L109.90,591.42 L110.40,595.97 L110.90,600.53 L111.40,605.09 L111.90,609.65 L112.40,614.19 L112.90,618.71 L113.40,623.18 L113.90,627.60 L114.40,631.96 L114.90,636.24 L115.40,640.44 L115.90,644.53 L116.40,648.53 L116.90,652.40 L117.40,656.14 L117.90,659.75 L118.40,663.21 L118.90,666.53 L119.40,669.69 L119.90,672.69 L120.40,675.54 L120.90,678.23 L121.40,680.77 L121.90,683.16 L122.40,685.41 L122.90,687.52 L123.40,689.50 L123.90,691.36 L124.40,693.11 L124.90,694.75 L125.40,696.29 L125.90,697.73 L126.40,699.10 L126.90,700.38 L127.40,701.59 L127.90,702.73 L128.40,703.81 L128.90,704.83 L129.40,705.80 L129.90,706.71 L130.40,707.58 L130.90,708.40 L131.40,709.17 L131.90,709.91 L132.40,710.61 L132.90,711.27 L133.40,711.90 L133.90,712.50 L134.40,713.06 L134.90,713.60 L135.40,714.11 L135.90,714.59 L136.40,715.05 L136.90,715.48 L137.40,715.89 L137.90,716.28 L138.40,716.65 L138.90,717.01 L139.40,717.34 L139.90,717.66 L140.40,717.96 L140.90,718.24 L141.40,718.51 L141.90,718.77 L142.40,719.01 L142.90,719.25 L143.40,719.46 L143.90,719.67 L144.40,719.87 L144.90,720.06 L145.40,720.23 L145.90,720.40 L146.40,720.56 L146.90,720.71 L147.40,720.86 L147.90,720.99 L148.40,721.12 L148.90,721.25 L149.40,721.36 L149.90,721.47 L150.40,721.58 L150.90,721.68 L151.40,721.77 L151.90,721.86 L152.40,721.95 L152.90,722.03 L153.40,722.10 L153.90,722.18 L154.40,722.25 L154.90,722.31 L155.40,722.37 L155.90,722.43 L156.40,722.49 L156.90,722.54 L157.40,722.59 L157.90,722.64 L158.40,722.68 L158.90,722.73 L159.40,722.77 L159.90,722.81 L160.40,722.84 L160.90,722.88 L161.40,722.91 L161.90,722.94 L162.40,722.97 L162.90,723.00 L163.40,723.03 L163.90,723.05 L164.40,723.08 L164.90,723.10 L165.40,723.12 L165.90,723.14 L166.40,723.16 L166.90,723.18 L167.40,723.20 L167.90,723.21 L168.40,723.23 L168.90,723.24 L169.40,723.26 L169.90,723.27 L170.40,723.28 L170.90,723.30 L171.40,723.31 L171.90,723.32 L172.40,723.33 L172.90,723.34 L173.40,723.35 L173.90,723.36 L174.40,723.36 L174.90,723.37 L175.40,723.38 L175.90,723.39 L176.40,723.39 L176.90,723.40 L177.40,723.41 L177.90,723.41 L178.40,723.42 L178.90,723.42 L179.40,723.43 L179.90,723.43 L180.40,723.44 L180.90,723.44 L181.40,723.45 L181.90,723.45 L182.40,723.45 L182.90,723.46 L183.40,723.46 L183.90,723.46 L184.40,723.47 L184.90,723.47 L185.40,723.47 L185.90,723.47 L186.40,723.48 L186.90,723.48 L187.40,723.48 L187.90,723.48 L188.40,723.48 L188.90,723.49 L189.40,723.49 L189.90,723.49 L190.40,723.49 L190.90,723.49 L191.40,723.49 L191.90,723.50 L192.40,723.50 L192.90,723.50 L193.40,723.50 L193.90,723.50 L194.40,723.50 L194.90,723.50 L195.40,723.50 L195.90,723.50 L196.40,723.50 L196.90,723.51 L197.40,723.51 L197.90,723.51 L198.40,723.51 L198.90,723.51 L199.40,723.51 L199.90,723.51 L200.40,723.51 L200.90,723.51 L201.40,723.51 L201.90,723.51 L202.40,723.51 L202.90,723.51 L203.40,723.51 L203.90,723.51 L204.40,723.51 L204.90,723.51 L205.40,723.51 L205.90,723.51 L206.40,723.51 L206.90,723.51 L207.40,723.52 L207.90,723.52 L208.40,723.52 L208.90,723.52 L209.40,723.52 L209.90,723.52 L210.40,723.52 L210.90,723.52 L211.40,723.52 L211.90,723.52 L212.40,723.52 L212.90,723.52 L213.40,723.52 L213.90,723.52 L214.40,723.52 L214.90,723.52 L215.40,723.52 L215.90,723.52 L216.40,723.52 L216.90,723.52 L217.40,723.52 L217.90,723.52 L218.40,723.52 L218.90,723.52 L219.40,723.52 L219.90,723.52 L220.40,723.52 L220.90,723.52 L221.40,723.52 L221.90,723.52 L222.40,723.52 L222.90,723.52 L223.40,723.52 L223.90,723.52 L224.40,723.52 L224.90,723.52" fill="none" stroke="#8e9cc4" stroke-width="1"/>
<line x1="56.4" y1="724.02" x2="225" y2="725.02" stroke="#9aa6cc" stroke-width="0.7" stroke-dasharray="1.5,1.5"/>
<line x1="101.36" y1="726.4" x2="101.36" y2="542.12" stroke="#25a83a" stroke-width="1.35"/>
<line x1="83.6" y1="727.9" x2="98" y2="541.12" stroke="#ea2a22" stroke-width="1.6"/>
<line x1="124.4" y1="727.9" x2="104.6" y2="542.12" stroke="#ea2a22" stroke-width="1.6"/>
<line x1="85.6" y1="705" x2="128.6" y2="705" stroke="#222" stroke-width="1.3"/>
<path d="M97.96,538.52 L105.56,538.52 L101.76,545.32Z" fill="#111"/>
<text x="102.96" y="538.92" font-size="8.6" fill="#1c2f5c">cmp 1</text>
<line x1="53.6" y1="714.40" x2="56.4" y2="714.40" stroke="#222" stroke-width="1"/>
<text x="52.40" y="717.60" font-size="9" text-anchor="end" fill="#0a0a0a" stroke="#111" stroke-width="0.22">0.00</text>
<line x1="53.6" y1="702.40" x2="56.4" y2="702.40" stroke="#222" stroke-width="1"/>
<text x="52.40" y="705.60" font-size="9" text-anchor="end" fill="#0a0a0a" stroke="#111" stroke-width="0.22">0.25</text>
<line x1="53.6" y1="690.40" x2="56.4" y2="690.40" stroke="#222" stroke-width="1"/>
<text x="52.40" y="693.60" font-size="9" text-anchor="end" fill="#0a0a0a" stroke="#111" stroke-width="0.22">0.50</text>
<line x1="53.6" y1="678.40" x2="56.4" y2="678.40" stroke="#222" stroke-width="1"/>
<text x="52.40" y="681.60" font-size="9" text-anchor="end" fill="#0a0a0a" stroke="#111" stroke-width="0.22">0.75</text>
<line x1="53.6" y1="666.40" x2="56.4" y2="666.40" stroke="#222" stroke-width="1"/>
<text x="52.40" y="669.60" font-size="9" text-anchor="end" fill="#0a0a0a" stroke="#111" stroke-width="0.22">1.00</text>
<line x1="53.6" y1="654.40" x2="56.4" y2="654.40" stroke="#222" stroke-width="1"/>
<text x="52.40" y="657.60" font-size="9" text-anchor="end" fill="#0a0a0a" stroke="#111" stroke-width="0.22">1.25</text>
<line x1="53.6" y1="642.40" x2="56.4" y2="642.40" stroke="#222" stroke-width="1"/>
<text x="52.40" y="645.60" font-size="9" text-anchor="end" fill="#0a0a0a" stroke="#111" stroke-width="0.22">1.50</text>
<line x1="53.6" y1="630.40" x2="56.4" y2="630.40" stroke="#222" stroke-width="1"/>
<text x="52.40" y="633.60" font-size="9" text-anchor="end" fill="#0a0a0a" stroke="#111" stroke-width="0.22">1.75</text>
<line x1="53.6" y1="618.40" x2="56.4" y2="618.40" stroke="#222" stroke-width="1"/>
<text x="52.40" y="621.60" font-size="9" text-anchor="end" fill="#0a0a0a" stroke="#111" stroke-width="0.22">2.00</text>
<line x1="53.6" y1="606.40" x2="56.4" y2="606.40" stroke="#222" stroke-width="1"/>
<text x="52.40" y="609.60" font-size="9" text-anchor="end" fill="#0a0a0a" stroke="#111" stroke-width="0.22">2.25</text>
<line x1="53.6" y1="594.40" x2="56.4" y2="594.40" stroke="#222" stroke-width="1"/>
<text x="52.40" y="597.60" font-size="9" text-anchor="end" fill="#0a0a0a" stroke="#111" stroke-width="0.22">2.50</text>
<line x1="53.6" y1="582.40" x2="56.4" y2="582.40" stroke="#222" stroke-width="1"/>
<text x="52.40" y="585.60" font-size="9" text-anchor="end" fill="#0a0a0a" stroke="#111" stroke-width="0.22">2.75</text>
<line x1="53.6" y1="570.40" x2="56.4" y2="570.40" stroke="#222" stroke-width="1"/>
<text x="52.40" y="573.60" font-size="9" text-anchor="end" fill="#0a0a0a" stroke="#111" stroke-width="0.22">3.00</text>
<line x1="53.6" y1="558.40" x2="56.4" y2="558.40" stroke="#222" stroke-width="1"/>
<text x="52.40" y="561.60" font-size="9" text-anchor="end" fill="#0a0a0a" stroke="#111" stroke-width="0.22">3.25</text>
<line x1="53.6" y1="546.40" x2="56.4" y2="546.40" stroke="#222" stroke-width="1"/>
<text x="52.40" y="549.60" font-size="9" text-anchor="end" fill="#0a0a0a" stroke="#111" stroke-width="0.22">3.50</text>
<line x1="53.6" y1="534.40" x2="56.4" y2="534.40" stroke="#222" stroke-width="1"/>
<text x="52.40" y="537.60" font-size="9" text-anchor="end" fill="#0a0a0a" stroke="#111" stroke-width="0.22">3.75</text>
<line x1="53.6" y1="522.40" x2="56.4" y2="522.40" stroke="#222" stroke-width="1"/>
<text x="52.40" y="525.60" font-size="9" text-anchor="end" fill="#0a0a0a" stroke="#111" stroke-width="0.22">4.00</text>
<line x1="53.6" y1="510.40" x2="56.4" y2="510.40" stroke="#222" stroke-width="1"/>
<text x="52.40" y="513.60" font-size="9" text-anchor="end" fill="#0a0a0a" stroke="#111" stroke-width="0.22">4.25</text>
<line x1="53.6" y1="498.40" x2="56.4" y2="498.40" stroke="#222" stroke-width="1"/>
<text x="52.40" y="501.60" font-size="9" text-anchor="end" fill="#0a0a0a" stroke="#111" stroke-width="0.22">4.50</text>
<line x1="52.4" y1="490.6" x2="56.4" y2="490.6" stroke="#222" stroke-width="1"/>
<text x="27.00" y="492.50" font-size="9" text-anchor="start" fill="#0a0a0a" stroke="#111" stroke-width="0.2">x10</text>
<text x="44.50" y="488.50" font-size="6.5" text-anchor="start" fill="#0a0a0a" stroke="#111" stroke-width="0.2">2</text>
<line x1="71.00" y1="726.4" x2="71.00" y2="729.9" stroke="#222" stroke-width="1"/>
<text x="71.00" y="739.60" font-size="9" text-anchor="middle" fill="#0a0a0a" stroke="#111" stroke-width="0.22">0.36</text>
<line x1="105.50" y1="726.4" x2="105.50" y2="729.9" stroke="#222" stroke-width="1"/>
<text x="105.50" y="739.60" font-size="9" text-anchor="middle" fill="#0a0a0a" stroke="#111" stroke-width="0.22">0.38</text>
<line x1="140.00" y1="726.4" x2="140.00" y2="729.9" stroke="#222" stroke-width="1"/>
<text x="140.00" y="739.60" font-size="9" text-anchor="middle" fill="#0a0a0a" stroke="#111" stroke-width="0.22">0.40</text>
<line x1="174.50" y1="726.4" x2="174.50" y2="729.9" stroke="#222" stroke-width="1"/>
<text x="174.50" y="739.60" font-size="9" text-anchor="middle" fill="#0a0a0a" stroke="#111" stroke-width="0.22">0.42</text>
<line x1="209.00" y1="726.4" x2="209.00" y2="729.9" stroke="#222" stroke-width="1"/>
<text x="209.00" y="739.60" font-size="9" text-anchor="middle" fill="#0a0a0a" stroke="#111" stroke-width="0.22">0.44</text>
<text x="140.00" y="751.00" font-size="9" text-anchor="middle" fill="#0a0a0a" stroke="#111" stroke-width="0.2">Time [min]</text>
<text transform="translate(26.6,604) rotate(-90)" font-size="9" text-anchor="middle" fill="#0a0a0a">mAU</text>
<rect x="277.4" y="481.4" width="168.20000000000005" height="245.0" fill="#fff" stroke="#222" stroke-width="2"/>
<text x="281.6" y="475.4" font-size="9.15" fill="#1c2f5c">Retention time: 1.649 min, Purity: N/A</text>
<path d="M277.40,723.18 L277.90,723.18 L278.40,723.18 L278.90,723.18 L279.40,723.18 L279.90,723.18 L280.40,723.18 L280.90,723.18 L281.40,723.18 L281.90,723.18 L282.40,723.18 L282.90,723.18 L283.40,723.18 L283.90,723.18 L284.40,723.18 L284.90,723.18 L285.40,723.18 L285.90,723.18 L286.40,723.18 L286.90,723.18 L287.40,723.18 L287.90,723.18 L288.40,723.18 L288.90,723.18 L289.40,723.18 L289.90,723.18 L290.40,723.18 L290.90,723.18 L291.40,723.18 L291.90,723.18 L292.40,723.18 L292.90,723.18 L293.40,723.18 L293.90,723.18 L294.40,723.18 L294.90,723.18 L295.40,723.18 L295.90,723.18 L296.40,723.18 L296.90,723.18 L297.40,723.18 L297.90,723.18 L298.40,723.18 L298.90,723.18 L299.40,723.18 L299.90,723.17 L300.40,723.17 L300.90,723.15 L301.40,723.13 L301.90,723.10 L302.40,723.05 L302.90,722.98 L303.40,722.88 L303.90,722.72 L304.40,722.50 L304.90,722.20 L305.40,721.78 L305.90,721.23 L306.40,720.49 L306.90,719.55 L307.40,718.34 L307.90,716.83 L308.40,714.98 L308.90,712.74 L309.40,710.08 L309.90,706.96 L310.40,703.35 L310.90,699.26 L311.40,694.66 L311.90,689.57 L312.40,684.00 L312.90,677.98 L313.40,671.55 L313.90,664.75 L314.40,657.63 L314.90,650.23 L315.40,642.63 L315.90,634.86 L316.40,627.00 L316.90,619.10 L317.40,611.22 L317.90,603.43 L318.40,595.81 L318.90,588.41 L319.40,581.31 L319.90,574.58 L320.40,568.31 L320.90,562.55 L321.40,557.39 L321.90,552.87 L322.40,549.05 L322.90,545.97 L323.40,543.65 L323.90,542.09 L324.40,541.29 L324.90,541.22 L325.40,541.84 L325.90,543.11 L326.40,544.95 L326.90,547.31 L327.40,550.11 L327.90,553.30 L328.40,556.81 L328.90,560.58 L329.40,564.55 L329.90,568.69 L330.40,572.95 L330.90,577.30 L331.40,581.72 L331.90,586.19 L332.40,590.68 L332.90,595.20 L333.40,599.73 L333.90,604.25 L334.40,608.77 L334.90,613.27 L335.40,617.74 L335.90,622.19 L336.40,626.59 L336.90,630.93 L337.40,635.21 L337.90,639.41 L338.40,643.51 L338.90,647.51 L339.40,651.38 L339.90,655.13 L340.40,658.72 L340.90,662.16 L341.40,665.44 L341.90,668.56 L342.40,671.50 L342.90,674.28 L343.40,676.89 L343.90,679.34 L344.40,681.64 L344.90,683.80 L345.40,685.83 L345.90,687.73 L346.40,689.51 L346.90,691.19 L347.40,692.77 L347.90,694.26 L348.40,695.67 L348.90,697.01 L349.40,698.27 L349.90,699.48 L350.40,700.62 L350.90,701.70 L351.40,702.73 L351.90,703.71 L352.40,704.64 L352.90,705.53 L353.40,706.37 L353.90,707.18 L354.40,707.94 L354.90,708.67 L355.40,709.37 L355.90,710.03 L356.40,710.66 L356.90,711.26 L357.40,711.83 L357.90,712.37 L358.40,712.89 L358.90,713.38 L359.40,713.85 L359.90,714.30 L360.40,714.72 L360.90,715.13 L361.40,715.51 L361.90,715.88 L362.40,716.23 L362.90,716.56 L363.40,716.88 L363.90,717.18 L364.40,717.47 L364.90,717.74 L365.40,718.00 L365.90,718.25 L366.40,718.48 L366.90,718.71 L367.40,718.92 L367.90,719.13 L368.40,719.32 L368.90,719.51 L369.40,719.68 L369.90,719.85 L370.40,720.01 L370.90,720.16 L371.40,720.31 L371.90,720.44 L372.40,720.57 L372.90,720.70 L373.40,720.82 L373.90,720.93 L374.40,721.04 L374.90,721.14 L375.40,721.24 L375.90,721.33 L376.40,721.42 L376.90,721.51 L377.40,721.59 L377.90,721.66 L378.40,721.73 L378.90,721.80 L379.40,721.87 L379.90,721.93 L380.40,721.99 L380.90,722.05 L381.40,722.10 L381.90,722.16 L382.40,722.20 L382.90,722.25 L383.40,722.30 L383.90,722.34 L384.40,722.38 L384.90,722.42 L385.40,722.45 L385.90,722.49 L386.40,722.52 L386.90,722.55 L387.40,722.58 L387.90,722.61 L388.40,722.64 L388.90,722.67 L389.40,722.69 L389.90,722.71 L390.40,722.74 L390.90,722.76 L391.40,722.78 L391.90,722.80 L392.40,722.82 L392.90,722.83 L393.40,722.85 L393.90,722.87 L394.40,722.88 L394.90,722.90 L395.40,722.91 L395.90,722.92 L396.40,722.94 L396.90,722.95 L397.40,722.96 L397.90,722.97 L398.40,722.98 L398.90,722.99 L399.40,723.00 L399.90,723.01 L400.40,723.02 L400.90,723.02 L401.40,723.03 L401.90,723.04 L402.40,723.05 L402.90,723.05 L403.40,723.06 L403.90,723.07 L404.40,723.07 L404.90,723.08 L405.40,723.08 L405.90,723.09 L406.40,723.09 L406.90,723.10 L407.40,723.10 L407.90,723.10 L408.40,723.11 L408.90,723.11 L409.40,723.11 L409.90,723.12 L410.40,723.12 L410.90,723.12 L411.40,723.13 L411.90,723.13 L412.40,723.13 L412.90,723.13 L413.40,723.14 L413.90,723.14 L414.40,723.14 L414.90,723.14 L415.40,723.15 L415.90,723.15 L416.40,723.15 L416.90,723.15 L417.40,723.15 L417.90,723.15 L418.40,723.16 L418.90,723.16 L419.40,723.16 L419.90,723.16 L420.40,723.16 L420.90,723.16 L421.40,723.16 L421.90,723.16 L422.40,723.16 L422.90,723.17 L423.40,723.17 L423.90,723.17 L424.40,723.17 L424.90,723.17 L425.40,723.17 L425.90,723.17 L426.40,723.17 L426.90,723.17 L427.40,723.17 L427.90,723.17 L428.40,723.17 L428.90,723.17 L429.40,723.17 L429.90,723.17 L430.40,723.18 L430.90,723.18 L431.40,723.18 L431.90,723.18 L432.40,723.18 L432.90,723.18 L433.40,723.18 L433.90,723.18 L434.40,723.18 L434.90,723.18 L435.40,723.18 L435.90,723.18 L436.40,723.18 L436.90,723.18 L437.40,723.18 L437.90,723.18 L438.40,723.18 L438.90,723.18 L439.40,723.18 L439.90,723.18 L440.40,723.18 L440.90,723.18 L441.40,723.18 L441.90,723.18 L442.40,723.18 L442.90,723.18 L443.40,723.18 L443.90,723.18 L444.40,723.18 L444.90,723.18 L445.40,723.18" fill="none" stroke="#8e9cc4" stroke-width="1"/>
<line x1="277.4" y1="723.68" x2="445.6" y2="724.68" stroke="#9aa6cc" stroke-width="0.7" stroke-dasharray="1.5,1.5"/>
<line x1="324.43" y1="726.4" x2="324.43" y2="542.17" stroke="#25a83a" stroke-width="1.35"/>
<line x1="310.6" y1="727.9" x2="321.4" y2="541.17" stroke="#ea2a22" stroke-width="1.6"/>
<line x1="347.4" y1="727.9" x2="327" y2="542.17" stroke="#ea2a22" stroke-width="1.6"/>
<line x1="312" y1="705" x2="354" y2="705" stroke="#222" stroke-width="1.3"/>
<path d="M321.03,538.57 L328.63,538.57 L324.83,545.37Z" fill="#111"/>
<text x="326.03" y="538.97" font-size="8.6" fill="#1c2f5c">cmp 5</text>
<line x1="274.59999999999997" y1="718.00" x2="277.4" y2="718.00" stroke="#222" stroke-width="1"/>
<text x="273.40" y="721.20" font-size="9" text-anchor="end" fill="#0a0a0a" stroke="#111" stroke-width="0.22">0.00</text>
<line x1="274.59999999999997" y1="703.60" x2="277.4" y2="703.60" stroke="#222" stroke-width="1"/>
<text x="273.40" y="706.80" font-size="9" text-anchor="end" fill="#0a0a0a" stroke="#111" stroke-width="0.22">0.25</text>
<line x1="274.59999999999997" y1="689.20" x2="277.4" y2="689.20" stroke="#222" stroke-width="1"/>
<text x="273.40" y="692.40" font-size="9" text-anchor="end" fill="#0a0a0a" stroke="#111" stroke-width="0.22">0.50</text>
<line x1="274.59999999999997" y1="674.80" x2="277.4" y2="674.80" stroke="#222" stroke-width="1"/>
<text x="273.40" y="678.00" font-size="9" text-anchor="end" fill="#0a0a0a" stroke="#111" stroke-width="0.22">0.75</text>
<line x1="274.59999999999997" y1="660.40" x2="277.4" y2="660.40" stroke="#222" stroke-width="1"/>
<text x="273.40" y="663.60" font-size="9" text-anchor="end" fill="#0a0a0a" stroke="#111" stroke-width="0.22">1.00</text>
<line x1="274.59999999999997" y1="646.00" x2="277.4" y2="646.00" stroke="#222" stroke-width="1"/>
<text x="273.40" y="649.20" font-size="9" text-anchor="end" fill="#0a0a0a" stroke="#111" stroke-width="0.22">1.25</text>
<line x1="274.59999999999997" y1="631.60" x2="277.4" y2="631.60" stroke="#222" stroke-width="1"/>
<text x="273.40" y="634.80" font-size="9" text-anchor="end" fill="#0a0a0a" stroke="#111" stroke-width="0.22">1.50</text>
<line x1="274.59999999999997" y1="617.20" x2="277.4" y2="617.20" stroke="#222" stroke-width="1"/>
<text x="273.40" y="620.40" font-size="9" text-anchor="end" fill="#0a0a0a" stroke="#111" stroke-width="0.22">1.75</text>
<line x1="274.59999999999997" y1="602.80" x2="277.4" y2="602.80" stroke="#222" stroke-width="1"/>
<text x="273.40" y="606.00" font-size="9" text-anchor="end" fill="#0a0a0a" stroke="#111" stroke-width="0.22">2.00</text>
<line x1="274.59999999999997" y1="588.40" x2="277.4" y2="588.40" stroke="#222" stroke-width="1"/>
<text x="273.40" y="591.60" font-size="9" text-anchor="end" fill="#0a0a0a" stroke="#111" stroke-width="0.22">2.25</text>
<line x1="274.59999999999997" y1="574.00" x2="277.4" y2="574.00" stroke="#222" stroke-width="1"/>
<text x="273.40" y="577.20" font-size="9" text-anchor="end" fill="#0a0a0a" stroke="#111" stroke-width="0.22">2.50</text>
<line x1="274.59999999999997" y1="559.60" x2="277.4" y2="559.60" stroke="#222" stroke-width="1"/>
<text x="273.40" y="562.80" font-size="9" text-anchor="end" fill="#0a0a0a" stroke="#111" stroke-width="0.22">2.75</text>
<line x1="274.59999999999997" y1="545.20" x2="277.4" y2="545.20" stroke="#222" stroke-width="1"/>
<text x="273.40" y="548.40" font-size="9" text-anchor="end" fill="#0a0a0a" stroke="#111" stroke-width="0.22">3.00</text>
<line x1="274.59999999999997" y1="530.80" x2="277.4" y2="530.80" stroke="#222" stroke-width="1"/>
<text x="273.40" y="534.00" font-size="9" text-anchor="end" fill="#0a0a0a" stroke="#111" stroke-width="0.22">3.25</text>
<line x1="274.59999999999997" y1="516.40" x2="277.4" y2="516.40" stroke="#222" stroke-width="1"/>
<text x="273.40" y="519.60" font-size="9" text-anchor="end" fill="#0a0a0a" stroke="#111" stroke-width="0.22">3.50</text>
<line x1="274.59999999999997" y1="502.00" x2="277.4" y2="502.00" stroke="#222" stroke-width="1"/>
<text x="273.40" y="505.20" font-size="9" text-anchor="end" fill="#0a0a0a" stroke="#111" stroke-width="0.22">3.75</text>
<line x1="273.4" y1="490.6" x2="277.4" y2="490.6" stroke="#222" stroke-width="1"/>
<text x="249.00" y="492.50" font-size="9" text-anchor="start" fill="#0a0a0a" stroke="#111" stroke-width="0.2">x10</text>
<text x="266.50" y="488.50" font-size="6.5" text-anchor="start" fill="#0a0a0a" stroke="#111" stroke-width="0.2">2</text>
<line x1="282.45" y1="726.4" x2="282.45" y2="729.9" stroke="#222" stroke-width="1"/>
<text x="282.45" y="739.60" font-size="9" text-anchor="middle" fill="#0a0a0a" stroke="#111" stroke-width="0.22">1.62</text>
<line x1="311.40" y1="726.4" x2="311.40" y2="729.9" stroke="#222" stroke-width="1"/>
<text x="311.40" y="739.60" font-size="9" text-anchor="middle" fill="#0a0a0a" stroke="#111" stroke-width="0.22">1.64</text>
<line x1="340.35" y1="726.4" x2="340.35" y2="729.9" stroke="#222" stroke-width="1"/>
<text x="340.35" y="739.60" font-size="9" text-anchor="middle" fill="#0a0a0a" stroke="#111" stroke-width="0.22">1.66</text>
<line x1="369.30" y1="726.4" x2="369.30" y2="729.9" stroke="#222" stroke-width="1"/>
<text x="369.30" y="739.60" font-size="9" text-anchor="middle" fill="#0a0a0a" stroke="#111" stroke-width="0.22">1.68</text>
<line x1="398.25" y1="726.4" x2="398.25" y2="729.9" stroke="#222" stroke-width="1"/>
<text x="398.25" y="739.60" font-size="9" text-anchor="middle" fill="#0a0a0a" stroke="#111" stroke-width="0.22">1.70</text>
<line x1="427.20" y1="726.4" x2="427.20" y2="729.9" stroke="#222" stroke-width="1"/>
<text x="427.20" y="739.60" font-size="9" text-anchor="middle" fill="#0a0a0a" stroke="#111" stroke-width="0.22">1.72</text>
<text x="354.83" y="751.00" font-size="9" text-anchor="middle" fill="#0a0a0a" stroke="#111" stroke-width="0.2">Time [min]</text>
<text transform="translate(247,604) rotate(-90)" font-size="9" text-anchor="middle" fill="#0a0a0a">mAU</text>
<rect x="499" y="481.4" width="167.60000000000002" height="245.0" fill="#fff" stroke="#222" stroke-width="2"/>
<text x="502.4" y="475.4" font-size="9.15" fill="#1c2f5c">Retention time: 2.161 min, Purity: N/A</text>
<path d="M499.00,723.37 L499.50,723.38 L500.00,723.39 L500.50,723.40 L501.00,723.41 L501.50,723.42 L502.00,723.43 L502.50,723.44 L503.00,723.45 L503.50,723.46 L504.00,723.47 L504.50,723.48 L505.00,723.49 L505.50,723.50 L506.00,723.51 L506.50,723.52 L507.00,723.53 L507.50,723.54 L508.00,723.55 L508.50,723.56 L509.00,723.57 L509.50,723.58 L510.00,723.59 L510.50,723.60 L511.00,723.60 L511.50,723.60 L512.00,723.58 L512.50,723.51 L513.00,723.37 L513.50,723.10 L514.00,722.60 L514.50,721.74 L515.00,720.35 L515.50,718.25 L516.00,715.21 L516.50,711.06 L517.00,705.65 L517.50,698.91 L518.00,690.86 L518.50,681.59 L519.00,671.28 L519.50,660.13 L520.00,648.36 L520.50,636.17 L521.00,623.77 L521.50,611.32 L522.00,599.04 L522.50,587.11 L523.00,575.80 L523.50,565.39 L524.00,556.17 L524.50,548.44 L525.00,542.45 L525.50,538.33 L526.00,536.12 L526.50,535.72 L527.00,536.95 L527.50,539.52 L528.00,543.14 L528.50,547.52 L529.00,552.43 L529.50,557.67 L530.00,563.11 L530.50,568.66 L531.00,574.28 L531.50,579.92 L532.00,585.57 L532.50,591.23 L533.00,596.89 L533.50,602.56 L534.00,608.22 L534.50,613.88 L535.00,619.54 L535.50,625.20 L536.00,630.85 L536.50,636.48 L537.00,642.09 L537.50,647.64 L538.00,653.12 L538.50,658.49 L539.00,663.68 L539.50,668.64 L540.00,673.32 L540.50,677.66 L541.00,681.63 L541.50,685.21 L542.00,688.40 L542.50,691.23 L543.00,693.73 L543.50,695.96 L544.00,697.96 L544.50,699.76 L545.00,701.41 L545.50,702.92 L546.00,704.32 L546.50,705.63 L547.00,706.85 L547.50,707.99 L548.00,709.05 L548.50,710.05 L549.00,710.98 L549.50,711.86 L550.00,712.67 L550.50,713.44 L551.00,714.16 L551.50,714.83 L552.00,715.46 L552.50,716.05 L553.00,716.60 L553.50,717.11 L554.00,717.60 L554.50,718.05 L555.00,718.48 L555.50,718.87 L556.00,719.25 L556.50,719.60 L557.00,719.93 L557.50,720.23 L558.00,720.52 L558.50,720.79 L559.00,721.04 L559.50,721.28 L560.00,721.50 L560.50,721.71 L561.00,721.91 L561.50,722.09 L562.00,722.27 L562.50,722.43 L563.00,722.58 L563.50,722.73 L564.00,722.86 L564.50,722.99 L565.00,723.11 L565.50,723.22 L566.00,723.33 L566.50,723.43 L567.00,723.52 L567.50,723.61 L568.00,723.69 L568.50,723.77 L569.00,723.84 L569.50,723.91 L570.00,723.98 L570.50,724.04 L571.00,724.10 L571.50,724.16 L572.00,724.21 L572.50,724.26 L573.00,724.31 L573.50,724.35 L574.00,724.40 L574.50,724.44 L575.00,724.48 L575.50,724.51 L576.00,724.55 L576.50,724.58 L577.00,724.61 L577.50,724.64 L578.00,724.67 L578.50,724.70 L579.00,724.73 L579.50,724.75 L580.00,724.78 L580.50,724.80 L581.00,724.83 L581.50,724.85 L582.00,724.87 L582.50,724.89 L583.00,724.91 L583.50,724.93 L584.00,724.95 L584.50,724.97 L585.00,724.98 L585.50,725.00 L586.00,725.02 L586.50,725.03 L587.00,725.05 L587.50,725.07 L588.00,725.08 L588.50,725.09 L589.00,725.11 L589.50,725.12 L590.00,725.14 L590.50,725.15 L591.00,725.16 L591.50,725.18 L592.00,725.19 L592.50,725.20 L593.00,725.22 L593.50,725.23 L594.00,725.24 L594.50,725.25 L595.00,725.27 L595.50,725.28 L596.00,725.29 L596.50,725.30 L597.00,725.31 L597.50,725.32 L598.00,725.33 L598.50,725.35 L599.00,725.36 L599.50,725.37 L600.00,725.38 L600.50,725.39 L601.00,725.40 L601.50,725.41 L602.00,725.42 L602.50,725.43 L603.00,725.44 L603.50,725.45 L604.00,725.47 L604.50,725.48 L605.00,725.49 L605.50,725.50 L606.00,725.51 L606.50,725.52 L607.00,725.53 L607.50,725.54 L608.00,725.55 L608.50,725.56 L609.00,725.57 L609.50,725.58 L610.00,725.59 L610.50,725.60 L611.00,725.61 L611.50,725.62 L612.00,725.63 L612.50,725.64 L613.00,725.65 L613.50,725.66 L614.00,725.67 L614.50,725.68 L615.00,725.69 L615.50,725.70 L616.00,725.71 L616.50,725.72 L617.00,725.73 L617.50,725.74 L618.00,725.75 L618.50,725.76 L619.00,725.77 L619.50,725.78 L620.00,725.79 L620.50,725.80 L621.00,725.81 L621.50,725.82 L622.00,725.83 L622.50,725.84 L623.00,725.85 L623.50,725.86 L624.00,725.87 L624.50,725.88 L625.00,725.89 L625.50,725.90 L626.00,725.91 L626.50,725.92 L627.00,725.93 L627.50,725.94 L628.00,725.95 L628.50,725.96 L629.00,725.97 L629.50,725.98 L630.00,725.99 L630.50,726.00 L631.00,726.01 L631.50,726.02 L632.00,726.03 L632.50,726.04 L633.00,726.05 L633.50,726.06 L634.00,726.07 L634.50,726.08 L635.00,726.09 L635.50,726.10 L636.00,726.11 L636.50,726.12 L637.00,726.13 L637.50,726.14 L638.00,726.15 L638.50,726.16 L639.00,726.17 L639.50,726.18 L640.00,726.19 L640.50,726.20 L641.00,726.21 L641.50,726.22 L642.00,726.23 L642.50,726.24 L643.00,726.25 L643.50,726.26 L644.00,726.27 L644.50,726.28 L645.00,726.29 L645.50,726.30 L646.00,726.31 L646.50,726.32 L647.00,726.33 L647.50,726.34 L648.00,726.35 L648.50,726.36 L649.00,726.37 L649.50,726.38 L650.00,726.39 L650.50,726.40 L651.00,726.40 L651.50,726.40 L652.00,726.40 L652.50,726.40 L653.00,726.40 L653.50,726.40 L654.00,726.40 L654.50,726.40 L655.00,726.40 L655.50,726.40 L656.00,726.40 L656.50,726.40 L657.00,726.40 L657.50,726.40 L658.00,726.40 L658.50,726.40 L659.00,726.40 L659.50,726.40 L660.00,726.40 L660.50,726.40 L661.00,726.40 L661.50,726.40 L662.00,726.40 L662.50,726.40 L663.00,726.40 L663.50,726.40 L664.00,726.40 L664.50,726.40 L665.00,726.40 L665.50,726.40 L666.00,726.40 L666.50,726.40" fill="none" stroke="#8e9cc4" stroke-width="1"/>
<line x1="499" y1="723.87" x2="666.6" y2="728.23" stroke="#9aa6cc" stroke-width="0.7" stroke-dasharray="1.5,1.5"/>
<line x1="526.00" y1="726.4" x2="526.00" y2="536.70" stroke="#25a83a" stroke-width="1.35"/>
<line x1="517" y1="727.9" x2="524.4" y2="535.70" stroke="#ea2a22" stroke-width="1.6"/>
<line x1="544.6" y1="727.9" x2="527.6" y2="536.70" stroke="#ea2a22" stroke-width="1.6"/>
<line x1="518" y1="706.4" x2="547" y2="706.4" stroke="#222" stroke-width="1.3"/>
<path d="M522.60,533.10 L530.20,533.10 L526.40,539.90Z" fill="#111"/>
<text x="527.60" y="533.50" font-size="8.6" fill="#1c2f5c">cmp 7</text>
<line x1="496.2" y1="712.40" x2="499" y2="712.40" stroke="#222" stroke-width="1"/>
<text x="495.00" y="715.60" font-size="9" text-anchor="end" fill="#0a0a0a" stroke="#111" stroke-width="0.22">0.0</text>
<line x1="496.2" y1="696.65" x2="499" y2="696.65" stroke="#222" stroke-width="1"/>
<text x="495.00" y="699.85" font-size="9" text-anchor="end" fill="#0a0a0a" stroke="#111" stroke-width="0.22">0.1</text>
<line x1="496.2" y1="680.90" x2="499" y2="680.90" stroke="#222" stroke-width="1"/>
<text x="495.00" y="684.10" font-size="9" text-anchor="end" fill="#0a0a0a" stroke="#111" stroke-width="0.22">0.2</text>
<line x1="496.2" y1="665.15" x2="499" y2="665.15" stroke="#222" stroke-width="1"/>
<text x="495.00" y="668.35" font-size="9" text-anchor="end" fill="#0a0a0a" stroke="#111" stroke-width="0.22">0.3</text>
<line x1="496.2" y1="649.40" x2="499" y2="649.40" stroke="#222" stroke-width="1"/>
<text x="495.00" y="652.60" font-size="9" text-anchor="end" fill="#0a0a0a" stroke="#111" stroke-width="0.22">0.4</text>
<line x1="496.2" y1="633.65" x2="499" y2="633.65" stroke="#222" stroke-width="1"/>
<text x="495.00" y="636.85" font-size="9" text-anchor="end" fill="#0a0a0a" stroke="#111" stroke-width="0.22">0.5</text>
<line x1="496.2" y1="617.90" x2="499" y2="617.90" stroke="#222" stroke-width="1"/>
<text x="495.00" y="621.10" font-size="9" text-anchor="end" fill="#0a0a0a" stroke="#111" stroke-width="0.22">0.6</text>
<line x1="496.2" y1="602.15" x2="499" y2="602.15" stroke="#222" stroke-width="1"/>
<text x="495.00" y="605.35" font-size="9" text-anchor="end" fill="#0a0a0a" stroke="#111" stroke-width="0.22">0.7</text>
<line x1="496.2" y1="586.40" x2="499" y2="586.40" stroke="#222" stroke-width="1"/>
<text x="495.00" y="589.60" font-size="9" text-anchor="end" fill="#0a0a0a" stroke="#111" stroke-width="0.22">0.8</text>
<line x1="496.2" y1="570.65" x2="499" y2="570.65" stroke="#222" stroke-width="1"/>
<text x="495.00" y="573.85" font-size="9" text-anchor="end" fill="#0a0a0a" stroke="#111" stroke-width="0.22">0.9</text>
<line x1="496.2" y1="554.90" x2="499" y2="554.90" stroke="#222" stroke-width="1"/>
<text x="495.00" y="558.10" font-size="9" text-anchor="end" fill="#0a0a0a" stroke="#111" stroke-width="0.22">1.0</text>
<line x1="496.2" y1="539.15" x2="499" y2="539.15" stroke="#222" stroke-width="1"/>
<text x="495.00" y="542.35" font-size="9" text-anchor="end" fill="#0a0a0a" stroke="#111" stroke-width="0.22">1.1</text>
<line x1="496.2" y1="523.40" x2="499" y2="523.40" stroke="#222" stroke-width="1"/>
<text x="495.00" y="526.60" font-size="9" text-anchor="end" fill="#0a0a0a" stroke="#111" stroke-width="0.22">1.2</text>
<line x1="496.2" y1="507.65" x2="499" y2="507.65" stroke="#222" stroke-width="1"/>
<text x="495.00" y="510.85" font-size="9" text-anchor="end" fill="#0a0a0a" stroke="#111" stroke-width="0.22">1.3</text>
<line x1="495" y1="490.6" x2="499" y2="490.6" stroke="#222" stroke-width="1"/>
<text x="470.00" y="492.50" font-size="9" text-anchor="start" fill="#0a0a0a" stroke="#111" stroke-width="0.2">x10</text>
<text x="487.50" y="488.50" font-size="6.5" text-anchor="start" fill="#0a0a0a" stroke="#111" stroke-width="0.2">2</text>
<line x1="501.60" y1="726.4" x2="501.60" y2="729.9" stroke="#222" stroke-width="1"/>
<text x="501.60" y="739.60" font-size="9" text-anchor="middle" fill="#0a0a0a" stroke="#111" stroke-width="0.22">2.1</text>
<line x1="540.95" y1="726.4" x2="540.95" y2="729.9" stroke="#222" stroke-width="1"/>
<text x="540.95" y="739.60" font-size="9" text-anchor="middle" fill="#0a0a0a" stroke="#111" stroke-width="0.22">2.2</text>
<line x1="580.30" y1="726.4" x2="580.30" y2="729.9" stroke="#222" stroke-width="1"/>
<text x="580.30" y="739.60" font-size="9" text-anchor="middle" fill="#0a0a0a" stroke="#111" stroke-width="0.22">2.3</text>
<line x1="619.65" y1="726.4" x2="619.65" y2="729.9" stroke="#222" stroke-width="1"/>
<text x="619.65" y="739.60" font-size="9" text-anchor="middle" fill="#0a0a0a" stroke="#111" stroke-width="0.22">2.4</text>
<line x1="659.00" y1="726.4" x2="659.00" y2="729.9" stroke="#222" stroke-width="1"/>
<text x="659.00" y="739.60" font-size="9" text-anchor="middle" fill="#0a0a0a" stroke="#111" stroke-width="0.22">2.5</text>
<text x="580.30" y="751.00" font-size="9" text-anchor="middle" fill="#0a0a0a" stroke="#111" stroke-width="0.2">Time [min]</text>
<text transform="translate(469,604) rotate(-90)" font-size="9" text-anchor="middle" fill="#0a0a0a">mAU</text>
</svg>
</body></html>
